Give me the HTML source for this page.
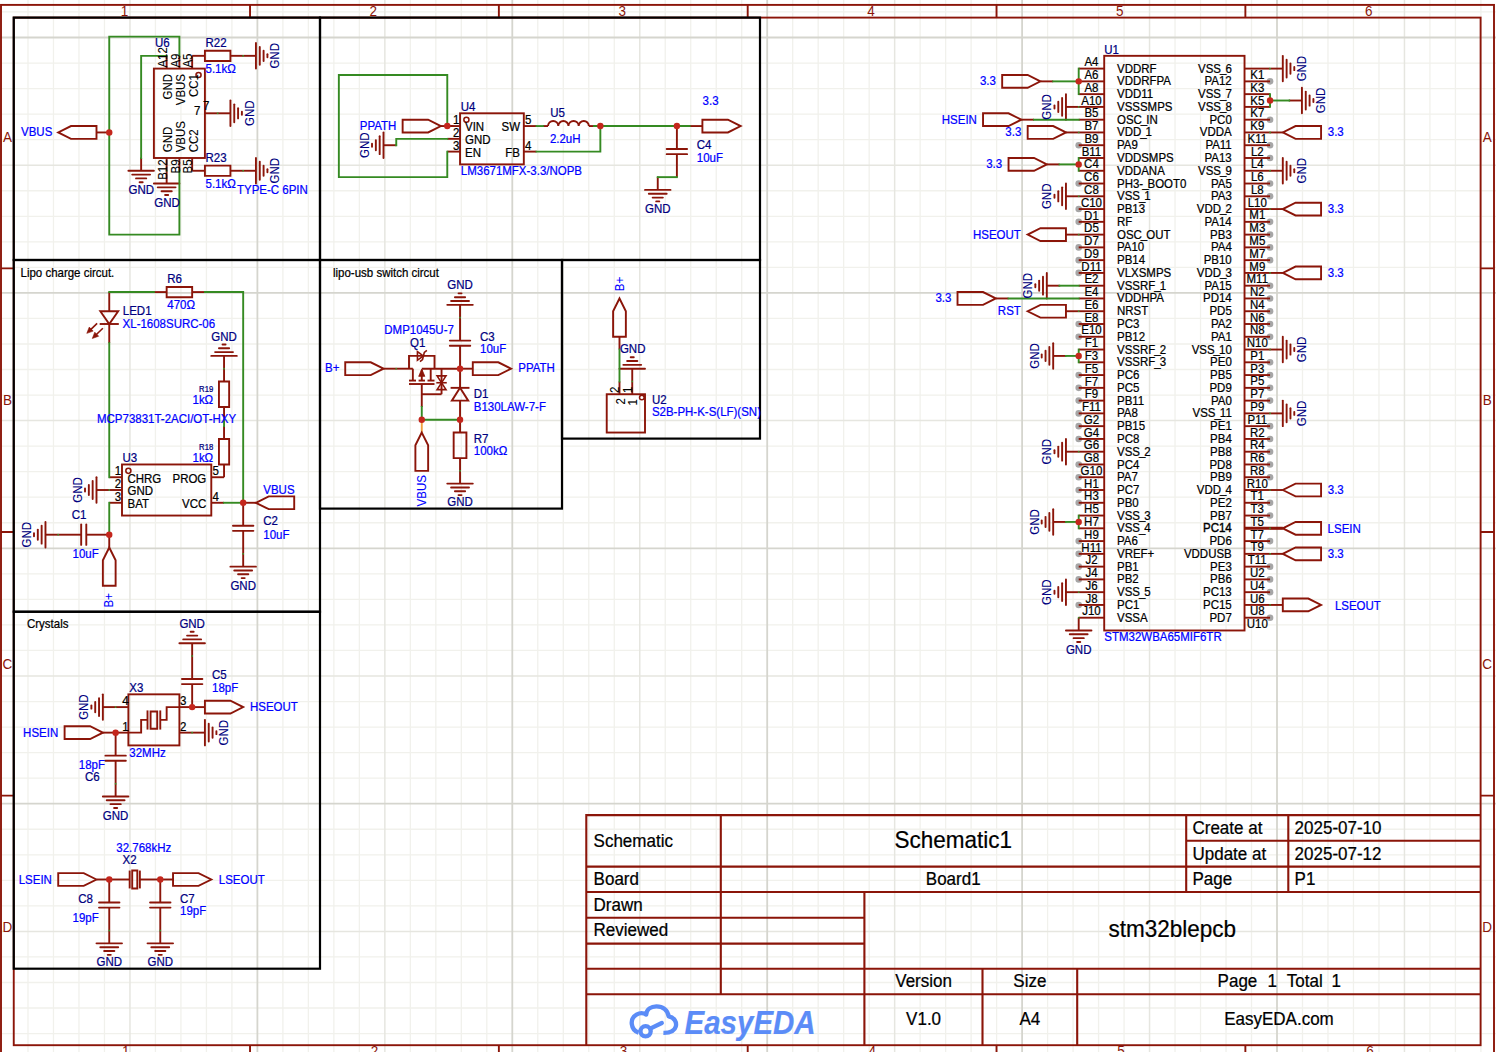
<!DOCTYPE html>
<html lang="en">
<head>
<meta charset="utf-8">
<title>stm32blepcb - Schematic1</title>
<style>html,body{margin:0;padding:0;background:#fff;overflow:hidden}svg{display:block}text{white-space:pre;stroke-width:.22px}.k{fill:#000;stroke:#000}.n{fill:#000080;stroke:#000080}.b{fill:#00f;stroke:#00f}.r{fill:#8b1509;stroke:none}.v{stroke-width:.08px}</style>
</head>
<body>
<svg width="1496" height="1052" viewBox="0 0 1496 1052" font-family="'Liberation Sans', sans-serif" font-size="11.5">
<g id="grid">
<path d="M27.99 0V1052M53.48 0V1052M78.97 0V1052M104.46 0V1052M155.44 0V1052M180.93 0V1052M206.42 0V1052M231.91 0V1052M282.89 0V1052M308.38 0V1052M333.87 0V1052M359.36 0V1052M410.34 0V1052M435.83 0V1052M461.32 0V1052M486.81 0V1052M537.79 0V1052M563.28 0V1052M588.77 0V1052M614.26 0V1052M665.24 0V1052M690.73 0V1052M716.22 0V1052M741.71 0V1052M792.69 0V1052M818.18 0V1052M843.67 0V1052M869.16 0V1052M920.14 0V1052M945.63 0V1052M971.12 0V1052M996.61 0V1052M1047.59 0V1052M1073.08 0V1052M1098.57 0V1052M1124.06 0V1052M1175.04 0V1052M1200.53 0V1052M1226.02 0V1052M1251.51 0V1052M1302.49 0V1052M1327.98 0V1052M1353.47 0V1052M1378.96 0V1052M1429.94 0V1052M1455.43 0V1052M1480.92 0V1052M0 11.96H1496M0 63.04H1496M0 88.58H1496M0 114.12H1496M0 139.66H1496M0 190.74H1496M0 216.28H1496M0 241.82H1496M0 267.36H1496M0 318.44H1496M0 343.98H1496M0 369.52H1496M0 395.06H1496M0 446.14H1496M0 471.68H1496M0 497.22H1496M0 522.76H1496M0 573.84H1496M0 599.38H1496M0 624.92H1496M0 650.46H1496M0 701.54H1496M0 727.08H1496M0 752.62H1496M0 778.16H1496M0 829.24H1496M0 854.78H1496M0 880.32H1496M0 905.86H1496M0 956.94H1496M0 982.48H1496M0 1008.02H1496M0 1033.56H1496" stroke="#f1f1ec" stroke-width="1.3" fill="none"/>
<path d="M129.95 0V1052M384.85 0V1052M639.75 0V1052M894.65 0V1052M1149.55 0V1052M1404.45 0V1052M0 165.2H1496M0 420.6H1496M0 676H1496M0 931.4H1496" stroke="#e6e6e0" stroke-width="1.5" fill="none"/>
<path d="M257.4 0V1052M512.3 0V1052M767.2 0V1052M1022.1 0V1052M1277 0V1052M0 37.5H1496M0 292.9H1496M0 548.3H1496M0 803.7H1496" stroke="#d5d5ce" stroke-width="1.8" fill="none"/>
</g>
<g id="frame">
<rect x="1" y="4.9" width="1493" height="1100" fill="none" stroke="#8b1509" stroke-width="1.9"/>
<rect x="13.75" y="17.6" width="1466.85" height="1027.6" fill="none" stroke="#8b1509" stroke-width="1.9"/>
<path d="M250.03 4.9V17.6M250.03 1045.2V1057M498.87 4.9V17.6M498.87 1045.2V1057M747.7 4.9V17.6M747.7 1045.2V1057M996.53 4.9V17.6M996.53 1045.2V1057M1245.37 4.9V17.6M1245.37 1045.2V1057M1 268.4H13.75M1480.6 268.4H1494M1 532H13.75M1480.6 532H1494M1 795.6H13.75M1480.6 795.6H1494" stroke="#8b1509" stroke-width="1.9" fill="none"/>
<path d="M586.3 1045.2V815.1H1480.6M720.8 815.1V994.2M586.3 866.6H1480.6M586.3 892H1480.6M586.3 917.8H864.4M586.3 943.6H864.4M586.3 968.7H1480.6M586.3 994.2H1480.6M864.4 892V1045.2M982.5 968.7V1045.2M1077.2 968.7V1045.2M1186.2 815.1V892M1288.3 815.1V892M1186.2 840.8H1480.6" stroke="#8b1509" stroke-width="2.1" fill="none"/>
<g fill="none" stroke="#5b8cf7" stroke-width="4.3" stroke-linecap="round" stroke-linejoin="round"><path d="M638.6 1032.6C630.6 1030 629.2 1018.6 636.5 1014.6C639.8 1012.8 643.6 1013 646.2 1014.6C646.6 1009.2 651.2 1006.3 656.4 1006.3C663 1006.3 668 1010.5 668.6 1016.4C674.5 1017.4 676.9 1022.2 675.8 1026.6C674.7 1030.9 671.2 1033 663.4 1032.9" stroke-linecap="butt"/><circle cx="645.6" cy="1031.3" r="5.1"/><path d="M650.2 1028.6L661.8 1023"/></g>
</g>
<g id="black">
<rect x="13.75" y="17.6" width="306.25" height="242.4" fill="none" stroke="#000" stroke-width="2.2"/>
<rect x="320" y="17.6" width="440" height="242.4" fill="none" stroke="#000" stroke-width="2.2"/>
<rect x="13.75" y="260" width="306.25" height="351.75" fill="none" stroke="#000" stroke-width="2.2"/>
<rect x="320" y="260" width="242" height="248.6" fill="none" stroke="#000" stroke-width="2.2"/>
<rect x="562" y="260" width="198" height="178.6" fill="none" stroke="#000" stroke-width="2.2"/>
<rect x="13.75" y="611.75" width="306.25" height="356.95" fill="none" stroke="#000" stroke-width="2.2"/>
</g>
<g id="nc">
<circle cx="1078.7" cy="145.22" r="3.3" fill="#a6a6a6"/>
<circle cx="1078.7" cy="183.53" r="3.3" fill="#a6a6a6"/>
<circle cx="1078.7" cy="209.07" r="3.3" fill="#a6a6a6"/>
<circle cx="1078.7" cy="221.84" r="3.3" fill="#a6a6a6"/>
<circle cx="1078.7" cy="247.38" r="3.3" fill="#a6a6a6"/>
<circle cx="1078.7" cy="260.15" r="3.3" fill="#a6a6a6"/>
<circle cx="1078.7" cy="272.92" r="3.3" fill="#a6a6a6"/>
<circle cx="1078.7" cy="324" r="3.3" fill="#a6a6a6"/>
<circle cx="1078.7" cy="336.77" r="3.3" fill="#a6a6a6"/>
<circle cx="1078.7" cy="375.08" r="3.3" fill="#a6a6a6"/>
<circle cx="1078.7" cy="387.85" r="3.3" fill="#a6a6a6"/>
<circle cx="1078.7" cy="400.62" r="3.3" fill="#a6a6a6"/>
<circle cx="1078.7" cy="413.39" r="3.3" fill="#a6a6a6"/>
<circle cx="1078.7" cy="426.16" r="3.3" fill="#a6a6a6"/>
<circle cx="1078.7" cy="438.93" r="3.3" fill="#a6a6a6"/>
<circle cx="1078.7" cy="464.47" r="3.3" fill="#a6a6a6"/>
<circle cx="1078.7" cy="477.24" r="3.3" fill="#a6a6a6"/>
<circle cx="1078.7" cy="490.01" r="3.3" fill="#a6a6a6"/>
<circle cx="1078.7" cy="502.78" r="3.3" fill="#a6a6a6"/>
<circle cx="1078.7" cy="541.09" r="3.3" fill="#a6a6a6"/>
<circle cx="1078.7" cy="553.86" r="3.3" fill="#a6a6a6"/>
<circle cx="1078.7" cy="566.63" r="3.3" fill="#a6a6a6"/>
<circle cx="1078.7" cy="579.4" r="3.3" fill="#a6a6a6"/>
<circle cx="1078.7" cy="604.94" r="3.3" fill="#a6a6a6"/>
<circle cx="1270.04" cy="81.37" r="3.3" fill="#a6a6a6"/>
<circle cx="1270.04" cy="119.68" r="3.3" fill="#a6a6a6"/>
<circle cx="1270.04" cy="145.22" r="3.3" fill="#a6a6a6"/>
<circle cx="1270.04" cy="157.99" r="3.3" fill="#a6a6a6"/>
<circle cx="1270.04" cy="183.53" r="3.3" fill="#a6a6a6"/>
<circle cx="1270.04" cy="196.3" r="3.3" fill="#a6a6a6"/>
<circle cx="1270.04" cy="221.84" r="3.3" fill="#a6a6a6"/>
<circle cx="1270.04" cy="234.61" r="3.3" fill="#a6a6a6"/>
<circle cx="1270.04" cy="247.38" r="3.3" fill="#a6a6a6"/>
<circle cx="1270.04" cy="260.15" r="3.3" fill="#a6a6a6"/>
<circle cx="1270.04" cy="285.69" r="3.3" fill="#a6a6a6"/>
<circle cx="1270.04" cy="298.46" r="3.3" fill="#a6a6a6"/>
<circle cx="1270.04" cy="311.23" r="3.3" fill="#a6a6a6"/>
<circle cx="1270.04" cy="324" r="3.3" fill="#a6a6a6"/>
<circle cx="1270.04" cy="336.77" r="3.3" fill="#a6a6a6"/>
<circle cx="1270.04" cy="362.31" r="3.3" fill="#a6a6a6"/>
<circle cx="1270.04" cy="375.08" r="3.3" fill="#a6a6a6"/>
<circle cx="1270.04" cy="387.85" r="3.3" fill="#a6a6a6"/>
<circle cx="1270.04" cy="400.62" r="3.3" fill="#a6a6a6"/>
<circle cx="1270.04" cy="426.16" r="3.3" fill="#a6a6a6"/>
<circle cx="1270.04" cy="438.93" r="3.3" fill="#a6a6a6"/>
<circle cx="1270.04" cy="451.7" r="3.3" fill="#a6a6a6"/>
<circle cx="1270.04" cy="464.47" r="3.3" fill="#a6a6a6"/>
<circle cx="1270.04" cy="477.24" r="3.3" fill="#a6a6a6"/>
<circle cx="1270.04" cy="502.78" r="3.3" fill="#a6a6a6"/>
<circle cx="1270.04" cy="515.55" r="3.3" fill="#a6a6a6"/>
<circle cx="1270.04" cy="541.09" r="3.3" fill="#a6a6a6"/>
<circle cx="1270.04" cy="566.63" r="3.3" fill="#a6a6a6"/>
<circle cx="1270.04" cy="579.4" r="3.3" fill="#a6a6a6"/>
<circle cx="1270.04" cy="592.17" r="3.3" fill="#a6a6a6"/>
<circle cx="1270.04" cy="617.71" r="3.3" fill="#a6a6a6"/>
</g>
<g id="sym">
<line x1="109.25" y1="132.45" x2="96.49" y2="132.45" stroke="#8b1509" stroke-width="1.9"/>
<path d="M96.49 126.06 L70.98 126.06 L58.22 132.45 L70.98 138.83 L96.49 138.83 Z" fill="none" stroke="#8b1509" stroke-width="1.9"/>
<rect x="153.89" y="68.6" width="51.02" height="89.39" fill="none" stroke="#8b1509" stroke-width="1.9"/>
<circle cx="198.54" cy="74.98" r="2.55" fill="none" stroke="#8b1509" stroke-width="1.5"/>
<line x1="166.65" y1="68.6" x2="166.65" y2="55.83" stroke="#8b1509" stroke-width="1.9"/>
<line x1="166.65" y1="157.99" x2="166.65" y2="170.76" stroke="#8b1509" stroke-width="1.9"/>
<line x1="179.4" y1="68.6" x2="179.4" y2="55.83" stroke="#8b1509" stroke-width="1.9"/>
<line x1="179.4" y1="157.99" x2="179.4" y2="170.76" stroke="#8b1509" stroke-width="1.9"/>
<line x1="192.16" y1="68.6" x2="192.16" y2="55.83" stroke="#8b1509" stroke-width="1.9"/>
<line x1="192.16" y1="157.99" x2="192.16" y2="170.76" stroke="#8b1509" stroke-width="1.9"/>
<line x1="204.92" y1="113.29" x2="217.67" y2="113.29" stroke="#8b1509" stroke-width="1.9"/>
<line x1="141.14" y1="157.99" x2="141.14" y2="170.76" stroke="#8b1509" stroke-width="1.9"/>
<line x1="153.89" y1="170.76" x2="128.38" y2="170.76" stroke="#8b1509" stroke-width="1.9" stroke-linecap="round"/>
<line x1="150.07" y1="174.59" x2="132.21" y2="174.59" stroke="#8b1509" stroke-width="1.9" stroke-linecap="round"/>
<line x1="146.24" y1="178.42" x2="136.03" y2="178.42" stroke="#8b1509" stroke-width="1.9" stroke-linecap="round"/>
<line x1="142.67" y1="182.25" x2="139.61" y2="182.25" stroke="#8b1509" stroke-width="1.9" stroke-linecap="round"/>
<line x1="166.65" y1="170.76" x2="166.65" y2="183.53" stroke="#8b1509" stroke-width="1.9"/>
<line x1="179.4" y1="183.53" x2="153.89" y2="183.53" stroke="#8b1509" stroke-width="1.9" stroke-linecap="round"/>
<line x1="175.58" y1="187.36" x2="157.72" y2="187.36" stroke="#8b1509" stroke-width="1.9" stroke-linecap="round"/>
<line x1="171.75" y1="191.19" x2="161.55" y2="191.19" stroke="#8b1509" stroke-width="1.9" stroke-linecap="round"/>
<line x1="168.18" y1="195.02" x2="165.12" y2="195.02" stroke="#8b1509" stroke-width="1.9" stroke-linecap="round"/>
<line x1="217.67" y1="113.29" x2="230.43" y2="113.29" stroke="#8b1509" stroke-width="1.9"/>
<line x1="230.43" y1="100.52" x2="230.43" y2="126.06" stroke="#8b1509" stroke-width="1.9" stroke-linecap="round"/>
<line x1="234.25" y1="104.36" x2="234.25" y2="122.23" stroke="#8b1509" stroke-width="1.9" stroke-linecap="round"/>
<line x1="238.08" y1="108.19" x2="238.08" y2="118.4" stroke="#8b1509" stroke-width="1.9" stroke-linecap="round"/>
<line x1="241.91" y1="111.76" x2="241.91" y2="114.83" stroke="#8b1509" stroke-width="1.9" stroke-linecap="round"/>
<line x1="192.16" y1="55.83" x2="204.92" y2="55.83" stroke="#8b1509" stroke-width="1.9"/>
<line x1="230.43" y1="55.83" x2="243.18" y2="55.83" stroke="#8b1509" stroke-width="1.9"/>
<path d="M204.92 60.94 L230.43 60.94 L230.43 50.72 L204.92 50.72 Z" fill="none" stroke="#8b1509" stroke-width="1.9"/>
<line x1="243.18" y1="55.83" x2="255.94" y2="55.83" stroke="#8b1509" stroke-width="1.9"/>
<line x1="255.94" y1="43.06" x2="255.94" y2="68.6" stroke="#8b1509" stroke-width="1.9" stroke-linecap="round"/>
<line x1="259.77" y1="46.89" x2="259.77" y2="64.77" stroke="#8b1509" stroke-width="1.9" stroke-linecap="round"/>
<line x1="263.59" y1="50.72" x2="263.59" y2="60.94" stroke="#8b1509" stroke-width="1.9" stroke-linecap="round"/>
<line x1="267.42" y1="54.3" x2="267.42" y2="57.36" stroke="#8b1509" stroke-width="1.9" stroke-linecap="round"/>
<line x1="192.16" y1="170.76" x2="204.92" y2="170.76" stroke="#8b1509" stroke-width="1.9"/>
<line x1="230.43" y1="170.76" x2="243.18" y2="170.76" stroke="#8b1509" stroke-width="1.9"/>
<path d="M204.92 175.87 L230.43 175.87 L230.43 165.65 L204.92 165.65 Z" fill="none" stroke="#8b1509" stroke-width="1.9"/>
<line x1="243.18" y1="170.76" x2="255.94" y2="170.76" stroke="#8b1509" stroke-width="1.9"/>
<line x1="255.94" y1="157.99" x2="255.94" y2="183.53" stroke="#8b1509" stroke-width="1.9" stroke-linecap="round"/>
<line x1="259.77" y1="161.82" x2="259.77" y2="179.7" stroke="#8b1509" stroke-width="1.9" stroke-linecap="round"/>
<line x1="263.59" y1="165.65" x2="263.59" y2="175.87" stroke="#8b1509" stroke-width="1.9" stroke-linecap="round"/>
<line x1="267.42" y1="169.23" x2="267.42" y2="172.29" stroke="#8b1509" stroke-width="1.9" stroke-linecap="round"/>
<line x1="396.26" y1="145.22" x2="383.5" y2="145.22" stroke="#8b1509" stroke-width="1.9"/>
<line x1="383.5" y1="157.99" x2="383.5" y2="132.45" stroke="#8b1509" stroke-width="1.9" stroke-linecap="round"/>
<line x1="379.67" y1="154.16" x2="379.67" y2="136.28" stroke="#8b1509" stroke-width="1.9" stroke-linecap="round"/>
<line x1="375.85" y1="150.33" x2="375.85" y2="140.11" stroke="#8b1509" stroke-width="1.9" stroke-linecap="round"/>
<line x1="372.02" y1="146.75" x2="372.02" y2="143.69" stroke="#8b1509" stroke-width="1.9" stroke-linecap="round"/>
<line x1="453.66" y1="126.06" x2="440.9" y2="126.06" stroke="#8b1509" stroke-width="1.9"/>
<path d="M440.9 126.06 L428.15 119.68 L402.63 119.68 L402.63 132.45 L428.15 132.45 Z" fill="none" stroke="#8b1509" stroke-width="1.9"/>
<rect x="460.04" y="113.29" width="63.78" height="51.08" fill="none" stroke="#8b1509" stroke-width="1.9"/>
<circle cx="466.41" cy="119.68" r="2.55" fill="none" stroke="#8b1509" stroke-width="1.5"/>
<line x1="447.28" y1="126.06" x2="460.04" y2="126.06" stroke="#8b1509" stroke-width="1.9"/>
<line x1="447.28" y1="138.83" x2="460.04" y2="138.83" stroke="#8b1509" stroke-width="1.9"/>
<line x1="447.28" y1="151.6" x2="460.04" y2="151.6" stroke="#8b1509" stroke-width="1.9"/>
<line x1="523.82" y1="126.06" x2="536.57" y2="126.06" stroke="#8b1509" stroke-width="1.9"/>
<line x1="523.82" y1="151.6" x2="536.57" y2="151.6" stroke="#8b1509" stroke-width="1.9"/>
<line x1="542.95" y1="126.06" x2="548.05" y2="126.06" stroke="#8b1509" stroke-width="1.9"/>
<line x1="588.87" y1="126.06" x2="593.97" y2="126.06" stroke="#8b1509" stroke-width="1.9"/>
<path d="M548.05 126.06A5.1 5.1 0 0 1 558.26 126.06A5.1 5.1 0 0 1 568.46 126.06A5.1 5.1 0 0 1 578.67 126.06A5.1 5.1 0 0 1 588.87 126.06" fill="none" stroke="#8b1509" stroke-width="1.9"/>
<line x1="689.64" y1="126.06" x2="702.4" y2="126.06" stroke="#8b1509" stroke-width="1.9"/>
<path d="M702.4 132.45 L727.91 132.45 L740.67 126.06 L727.91 119.68 L702.4 119.68 Z" fill="none" stroke="#8b1509" stroke-width="1.9"/>
<line x1="676.89" y1="126.06" x2="676.89" y2="149.05" stroke="#8b1509" stroke-width="1.9"/>
<line x1="676.89" y1="154.16" x2="676.89" y2="177.14" stroke="#8b1509" stroke-width="1.9"/>
<line x1="687.09" y1="149.05" x2="666.68" y2="149.05" stroke="#8b1509" stroke-width="1.9" stroke-linecap="round"/>
<line x1="687.09" y1="154.16" x2="666.68" y2="154.16" stroke="#8b1509" stroke-width="1.9" stroke-linecap="round"/>
<line x1="657.75" y1="177.14" x2="657.75" y2="189.91" stroke="#8b1509" stroke-width="1.9"/>
<line x1="670.51" y1="189.91" x2="645" y2="189.91" stroke="#8b1509" stroke-width="1.9" stroke-linecap="round"/>
<line x1="666.68" y1="193.75" x2="648.82" y2="193.75" stroke="#8b1509" stroke-width="1.9" stroke-linecap="round"/>
<line x1="662.86" y1="197.58" x2="652.65" y2="197.58" stroke="#8b1509" stroke-width="1.9" stroke-linecap="round"/>
<line x1="659.28" y1="201.41" x2="656.22" y2="201.41" stroke="#8b1509" stroke-width="1.9" stroke-linecap="round"/>
<line x1="153.89" y1="292.07" x2="166.65" y2="292.07" stroke="#8b1509" stroke-width="1.9"/>
<line x1="192.16" y1="292.07" x2="204.92" y2="292.07" stroke="#8b1509" stroke-width="1.9"/>
<path d="M166.65 297.18 L192.16 297.18 L192.16 286.97 L166.65 286.97 Z" fill="none" stroke="#8b1509" stroke-width="1.9"/>
<line x1="109.25" y1="292.07" x2="109.25" y2="311.23" stroke="#8b1509" stroke-width="1.9"/>
<path d="M100.32 311.23 L118.18 311.23 L109.25 324 Z" fill="none" stroke="#8b1509" stroke-width="1.9"/>
<line x1="99.68" y1="324" x2="118.81" y2="324" stroke="#8b1509" stroke-width="1.9"/>
<line x1="109.25" y1="324" x2="109.25" y2="343.15" stroke="#8b1509" stroke-width="1.9"/>
<line x1="97.13" y1="323.36" x2="88.84" y2="331.41" stroke="#8b1509" stroke-width="1.6"/>
<path d="M86.82 333.36 L89.26 327.08 L93.17 331.11 Z" fill="#8b1509" stroke="#8b1509" stroke-width="0.6"/>
<line x1="102.87" y1="328.21" x2="94.32" y2="336.51" stroke="#8b1509" stroke-width="1.6"/>
<path d="M92.31 338.47 L94.75 332.19 L98.66 336.22 Z" fill="#8b1509" stroke="#8b1509" stroke-width="0.6"/>
<rect x="122" y="464.47" width="89.29" height="51.08" fill="none" stroke="#8b1509" stroke-width="1.9"/>
<circle cx="128.38" cy="470.85" r="2.55" fill="none" stroke="#8b1509" stroke-width="1.5"/>
<line x1="109.25" y1="477.24" x2="122" y2="477.24" stroke="#8b1509" stroke-width="1.9"/>
<line x1="109.25" y1="490.01" x2="122" y2="490.01" stroke="#8b1509" stroke-width="1.9"/>
<line x1="109.25" y1="502.78" x2="122" y2="502.78" stroke="#8b1509" stroke-width="1.9"/>
<line x1="211.29" y1="477.24" x2="224.05" y2="477.24" stroke="#8b1509" stroke-width="1.9"/>
<line x1="211.29" y1="502.78" x2="224.05" y2="502.78" stroke="#8b1509" stroke-width="1.9"/>
<line x1="109.25" y1="490.01" x2="96.49" y2="490.01" stroke="#8b1509" stroke-width="1.9"/>
<line x1="96.49" y1="502.78" x2="96.49" y2="477.24" stroke="#8b1509" stroke-width="1.9" stroke-linecap="round"/>
<line x1="92.66" y1="498.95" x2="92.66" y2="481.07" stroke="#8b1509" stroke-width="1.9" stroke-linecap="round"/>
<line x1="88.84" y1="495.12" x2="88.84" y2="484.9" stroke="#8b1509" stroke-width="1.9" stroke-linecap="round"/>
<line x1="85.01" y1="491.54" x2="85.01" y2="488.48" stroke="#8b1509" stroke-width="1.9" stroke-linecap="round"/>
<line x1="224.05" y1="477.24" x2="224.05" y2="464.47" stroke="#8b1509" stroke-width="1.9"/>
<line x1="224.05" y1="438.93" x2="224.05" y2="426.16" stroke="#8b1509" stroke-width="1.9"/>
<path d="M229.15 464.47 L229.15 438.93 L218.95 438.93 L218.95 464.47 Z" fill="none" stroke="#8b1509" stroke-width="1.9"/>
<line x1="224.05" y1="419.77" x2="224.05" y2="407" stroke="#8b1509" stroke-width="1.9"/>
<line x1="224.05" y1="381.46" x2="224.05" y2="368.69" stroke="#8b1509" stroke-width="1.9"/>
<path d="M229.15 407 L229.15 381.46 L218.95 381.46 L218.95 407 Z" fill="none" stroke="#8b1509" stroke-width="1.9"/>
<line x1="224.05" y1="368.69" x2="224.05" y2="355.92" stroke="#8b1509" stroke-width="1.9"/>
<line x1="211.29" y1="355.92" x2="236.81" y2="355.92" stroke="#8b1509" stroke-width="1.9" stroke-linecap="round"/>
<line x1="215.12" y1="352.09" x2="232.98" y2="352.09" stroke="#8b1509" stroke-width="1.9" stroke-linecap="round"/>
<line x1="218.95" y1="348.26" x2="229.15" y2="348.26" stroke="#8b1509" stroke-width="1.9" stroke-linecap="round"/>
<line x1="222.52" y1="344.43" x2="225.58" y2="344.43" stroke="#8b1509" stroke-width="1.9" stroke-linecap="round"/>
<line x1="243.18" y1="502.78" x2="255.94" y2="502.78" stroke="#8b1509" stroke-width="1.9"/>
<path d="M255.94 502.78 L268.7 509.16 L294.21 509.16 L294.21 496.39 L268.7 496.39 Z" fill="none" stroke="#8b1509" stroke-width="1.9"/>
<line x1="243.18" y1="502.78" x2="243.18" y2="525.77" stroke="#8b1509" stroke-width="1.9"/>
<line x1="243.18" y1="530.87" x2="243.18" y2="553.86" stroke="#8b1509" stroke-width="1.9"/>
<line x1="253.39" y1="525.77" x2="232.98" y2="525.77" stroke="#8b1509" stroke-width="1.9" stroke-linecap="round"/>
<line x1="253.39" y1="530.87" x2="232.98" y2="530.87" stroke="#8b1509" stroke-width="1.9" stroke-linecap="round"/>
<line x1="243.18" y1="553.86" x2="243.18" y2="566.63" stroke="#8b1509" stroke-width="1.9"/>
<line x1="255.94" y1="566.63" x2="230.43" y2="566.63" stroke="#8b1509" stroke-width="1.9" stroke-linecap="round"/>
<line x1="252.11" y1="570.46" x2="234.25" y2="570.46" stroke="#8b1509" stroke-width="1.9" stroke-linecap="round"/>
<line x1="248.29" y1="574.29" x2="238.08" y2="574.29" stroke="#8b1509" stroke-width="1.9" stroke-linecap="round"/>
<line x1="244.71" y1="578.12" x2="241.65" y2="578.12" stroke="#8b1509" stroke-width="1.9" stroke-linecap="round"/>
<line x1="109.25" y1="534.7" x2="86.29" y2="534.7" stroke="#8b1509" stroke-width="1.9"/>
<line x1="81.18" y1="534.7" x2="58.22" y2="534.7" stroke="#8b1509" stroke-width="1.9"/>
<line x1="86.29" y1="544.92" x2="86.29" y2="524.49" stroke="#8b1509" stroke-width="1.9" stroke-linecap="round"/>
<line x1="81.18" y1="544.92" x2="81.18" y2="524.49" stroke="#8b1509" stroke-width="1.9" stroke-linecap="round"/>
<line x1="58.22" y1="534.7" x2="45.47" y2="534.7" stroke="#8b1509" stroke-width="1.9"/>
<line x1="45.47" y1="547.47" x2="45.47" y2="521.93" stroke="#8b1509" stroke-width="1.9" stroke-linecap="round"/>
<line x1="41.64" y1="543.64" x2="41.64" y2="525.77" stroke="#8b1509" stroke-width="1.9" stroke-linecap="round"/>
<line x1="37.81" y1="539.81" x2="37.81" y2="529.6" stroke="#8b1509" stroke-width="1.9" stroke-linecap="round"/>
<line x1="33.99" y1="536.24" x2="33.99" y2="533.17" stroke="#8b1509" stroke-width="1.9" stroke-linecap="round"/>
<line x1="109.25" y1="534.7" x2="109.25" y2="547.47" stroke="#8b1509" stroke-width="1.9"/>
<path d="M109.25 547.47 L102.87 560.25 L102.87 585.78 L115.62 585.78 L115.62 560.25 Z" fill="none" stroke="#8b1509" stroke-width="1.9"/>
<line x1="460.04" y1="317.61" x2="460.04" y2="304.84" stroke="#8b1509" stroke-width="1.9"/>
<line x1="447.28" y1="304.84" x2="472.79" y2="304.84" stroke="#8b1509" stroke-width="1.9" stroke-linecap="round"/>
<line x1="451.11" y1="301.01" x2="468.97" y2="301.01" stroke="#8b1509" stroke-width="1.9" stroke-linecap="round"/>
<line x1="454.93" y1="297.18" x2="465.14" y2="297.18" stroke="#8b1509" stroke-width="1.9" stroke-linecap="round"/>
<line x1="458.51" y1="293.35" x2="461.57" y2="293.35" stroke="#8b1509" stroke-width="1.9" stroke-linecap="round"/>
<line x1="460.04" y1="317.61" x2="460.04" y2="340.6" stroke="#8b1509" stroke-width="1.9"/>
<line x1="460.04" y1="345.71" x2="460.04" y2="368.69" stroke="#8b1509" stroke-width="1.9"/>
<line x1="470.24" y1="340.6" x2="449.83" y2="340.6" stroke="#8b1509" stroke-width="1.9" stroke-linecap="round"/>
<line x1="470.24" y1="345.71" x2="449.83" y2="345.71" stroke="#8b1509" stroke-width="1.9" stroke-linecap="round"/>
<line x1="460.04" y1="368.69" x2="472.79" y2="368.69" stroke="#8b1509" stroke-width="1.9"/>
<path d="M472.79 375.08 L498.3 375.08 L511.06 368.69 L498.3 362.31 L472.79 362.31 Z" fill="none" stroke="#8b1509" stroke-width="1.9"/>
<line x1="396.26" y1="368.69" x2="383.5" y2="368.69" stroke="#8b1509" stroke-width="1.9"/>
<path d="M383.5 368.69 L370.74 362.31 L345.23 362.31 L345.23 375.08 L370.74 375.08 Z" fill="none" stroke="#8b1509" stroke-width="1.9"/>
<line x1="396.26" y1="368.69" x2="412.84" y2="368.69" stroke="#8b1509" stroke-width="1.9"/>
<line x1="412.84" y1="368.69" x2="412.84" y2="380.57" stroke="#8b1509" stroke-width="1.9"/>
<path d="M409.01 368.69 L409.01 355.92 L434.52 355.92 L434.52 368.69" fill="none" stroke="#8b1509" stroke-width="1.9"/>
<line x1="421.77" y1="368.69" x2="460.04" y2="368.69" stroke="#8b1509" stroke-width="1.9"/>
<line x1="421.77" y1="369.97" x2="421.77" y2="380.57" stroke="#8b1509" stroke-width="1.9"/>
<line x1="430.7" y1="368.69" x2="430.7" y2="380.57" stroke="#8b1509" stroke-width="1.9"/>
<path d="M421.77 369.08 L418.71 376.36 L424.83 376.36 Z" fill="#8b1509" stroke="#8b1509" stroke-width="0.8"/>
<line x1="409.01" y1="380.57" x2="416.03" y2="380.57" stroke="#8b1509" stroke-width="1.9"/>
<line x1="418.58" y1="380.57" x2="424.96" y2="380.57" stroke="#8b1509" stroke-width="1.9"/>
<line x1="427.51" y1="380.57" x2="434.52" y2="380.57" stroke="#8b1509" stroke-width="1.9"/>
<line x1="409.01" y1="384.02" x2="434.52" y2="384.02" stroke="#8b1509" stroke-width="1.9"/>
<line x1="421.77" y1="384.02" x2="421.77" y2="407" stroke="#8b1509" stroke-width="1.9"/>
<path d="M417.43 351.58 L417.43 360.27 L423.3 355.92 Z" fill="none" stroke="#8b1509" stroke-width="1.6"/>
<path d="M426.87 350.31 L424.32 352.35 L422.53 359.5 L419.98 361.54" fill="none" stroke="#8b1509" stroke-width="1.6"/>
<line x1="441.54" y1="368.69" x2="441.54" y2="394.23" stroke="#8b1509" stroke-width="1.9"/>
<line x1="441.54" y1="394.23" x2="421.77" y2="394.23" stroke="#8b1509" stroke-width="1.9"/>
<path d="M437.08 375.85 L446 375.85 L437.08 389.64 L446 389.64 Z" fill="none" stroke="#8b1509" stroke-width="1.6"/>
<line x1="436.31" y1="382.74" x2="446.77" y2="382.74" stroke="#8b1509" stroke-width="1.6"/>
<line x1="460.04" y1="368.69" x2="460.04" y2="387.85" stroke="#8b1509" stroke-width="1.9"/>
<line x1="450.6" y1="387.85" x2="469.48" y2="387.85" stroke="#8b1509" stroke-width="1.9"/>
<path d="M460.04 387.85 L451.87 400.62 L468.2 400.62 Z" fill="none" stroke="#8b1509" stroke-width="1.9"/>
<line x1="460.04" y1="400.62" x2="460.04" y2="419.77" stroke="#8b1509" stroke-width="1.9"/>
<line x1="421.77" y1="419.77" x2="421.77" y2="432.54" stroke="#f0a040" stroke-width="1.9"/>
<path d="M421.77 432.54 L415.39 445.31 L415.39 470.85 L428.15 470.85 L428.15 445.31 Z" fill="none" stroke="#8b1509" stroke-width="1.9"/>
<line x1="460.04" y1="419.77" x2="460.04" y2="432.54" stroke="#8b1509" stroke-width="1.9"/>
<line x1="460.04" y1="458.08" x2="460.04" y2="470.85" stroke="#8b1509" stroke-width="1.9"/>
<path d="M453.66 432.54 L453.66 458.08 L466.41 458.08 L466.41 432.54 Z" fill="none" stroke="#8b1509" stroke-width="1.9"/>
<line x1="460.04" y1="470.85" x2="460.04" y2="483.62" stroke="#8b1509" stroke-width="1.9"/>
<line x1="472.79" y1="483.62" x2="447.28" y2="483.62" stroke="#8b1509" stroke-width="1.9" stroke-linecap="round"/>
<line x1="468.97" y1="487.46" x2="451.11" y2="487.46" stroke="#8b1509" stroke-width="1.9" stroke-linecap="round"/>
<line x1="465.14" y1="491.29" x2="454.93" y2="491.29" stroke="#8b1509" stroke-width="1.9" stroke-linecap="round"/>
<line x1="461.57" y1="495.12" x2="458.51" y2="495.12" stroke="#8b1509" stroke-width="1.9" stroke-linecap="round"/>
<line x1="619.49" y1="349.54" x2="619.49" y2="336.77" stroke="#8b1509" stroke-width="1.9"/>
<path d="M625.86 336.77 L625.86 311.23 L619.49 298.46 L613.11 311.23 L613.11 336.77 Z" fill="none" stroke="#8b1509" stroke-width="1.9"/>
<line x1="619.49" y1="381.46" x2="619.49" y2="394.23" stroke="#8b1509" stroke-width="1.9"/>
<line x1="632.24" y1="381.46" x2="632.24" y2="394.23" stroke="#8b1509" stroke-width="1.9"/>
<line x1="632.24" y1="381.46" x2="632.24" y2="368.69" stroke="#8b1509" stroke-width="1.9"/>
<line x1="619.49" y1="368.69" x2="645" y2="368.69" stroke="#8b1509" stroke-width="1.9" stroke-linecap="round"/>
<line x1="623.31" y1="364.86" x2="641.17" y2="364.86" stroke="#8b1509" stroke-width="1.9" stroke-linecap="round"/>
<line x1="627.14" y1="361.03" x2="637.34" y2="361.03" stroke="#8b1509" stroke-width="1.9" stroke-linecap="round"/>
<line x1="630.71" y1="357.2" x2="633.77" y2="357.2" stroke="#8b1509" stroke-width="1.9" stroke-linecap="round"/>
<rect x="606.73" y="394.23" width="38.27" height="38.31" fill="none" stroke="#8b1509" stroke-width="1.9"/>
<circle cx="641.81" cy="397.56" r="2.3" fill="none" stroke="#8b1509" stroke-width="1.5"/>
<line x1="192.16" y1="656.02" x2="192.16" y2="643.25" stroke="#8b1509" stroke-width="1.9"/>
<line x1="179.4" y1="643.25" x2="204.92" y2="643.25" stroke="#8b1509" stroke-width="1.9" stroke-linecap="round"/>
<line x1="183.23" y1="639.42" x2="201.09" y2="639.42" stroke="#8b1509" stroke-width="1.9" stroke-linecap="round"/>
<line x1="187.06" y1="635.59" x2="197.26" y2="635.59" stroke="#8b1509" stroke-width="1.9" stroke-linecap="round"/>
<line x1="190.63" y1="631.76" x2="193.69" y2="631.76" stroke="#8b1509" stroke-width="1.9" stroke-linecap="round"/>
<line x1="192.16" y1="656.02" x2="192.16" y2="679.01" stroke="#8b1509" stroke-width="1.9"/>
<line x1="192.16" y1="684.11" x2="192.16" y2="707.1" stroke="#8b1509" stroke-width="1.9"/>
<line x1="202.36" y1="679.01" x2="181.96" y2="679.01" stroke="#8b1509" stroke-width="1.9" stroke-linecap="round"/>
<line x1="202.36" y1="684.11" x2="181.96" y2="684.11" stroke="#8b1509" stroke-width="1.9" stroke-linecap="round"/>
<rect x="128.38" y="694.33" width="51.02" height="51.08" fill="none" stroke="#8b1509" stroke-width="1.9"/>
<line x1="115.62" y1="707.1" x2="128.38" y2="707.1" stroke="#8b1509" stroke-width="1.9"/>
<line x1="179.4" y1="707.1" x2="192.16" y2="707.1" stroke="#8b1509" stroke-width="1.9"/>
<line x1="115.62" y1="732.64" x2="128.38" y2="732.64" stroke="#8b1509" stroke-width="1.9"/>
<line x1="179.4" y1="732.64" x2="192.16" y2="732.64" stroke="#8b1509" stroke-width="1.9"/>
<path d="M128.38 732.64 L141.14 732.64 L141.14 719.87 L147.51 719.87" fill="none" stroke="#8b1509" stroke-width="1.9"/>
<line x1="147.51" y1="710.42" x2="147.51" y2="729.58" stroke="#8b1509" stroke-width="1.9"/>
<line x1="160.27" y1="710.42" x2="160.27" y2="729.58" stroke="#8b1509" stroke-width="1.9"/>
<path d="M150.58 711.44 L157.21 711.44 L157.21 728.81 L150.58 728.81 Z" fill="none" stroke="#8b1509" stroke-width="1.9"/>
<path d="M160.27 719.87 L166.65 719.87 L166.65 707.1 L179.4 707.1" fill="none" stroke="#8b1509" stroke-width="1.9"/>
<line x1="115.62" y1="707.1" x2="102.87" y2="707.1" stroke="#8b1509" stroke-width="1.9"/>
<line x1="102.87" y1="719.87" x2="102.87" y2="694.33" stroke="#8b1509" stroke-width="1.9" stroke-linecap="round"/>
<line x1="99.04" y1="716.04" x2="99.04" y2="698.16" stroke="#8b1509" stroke-width="1.9" stroke-linecap="round"/>
<line x1="95.21" y1="712.21" x2="95.21" y2="701.99" stroke="#8b1509" stroke-width="1.9" stroke-linecap="round"/>
<line x1="91.39" y1="708.63" x2="91.39" y2="705.57" stroke="#8b1509" stroke-width="1.9" stroke-linecap="round"/>
<line x1="115.62" y1="732.64" x2="102.87" y2="732.64" stroke="#8b1509" stroke-width="1.9"/>
<path d="M102.87 732.64 L90.11 726.25 L64.6 726.25 L64.6 739.02 L90.11 739.02 Z" fill="none" stroke="#8b1509" stroke-width="1.9"/>
<line x1="115.62" y1="732.64" x2="115.62" y2="755.63" stroke="#8b1509" stroke-width="1.9"/>
<line x1="115.62" y1="760.73" x2="115.62" y2="783.72" stroke="#8b1509" stroke-width="1.9"/>
<line x1="125.83" y1="755.63" x2="105.42" y2="755.63" stroke="#8b1509" stroke-width="1.9" stroke-linecap="round"/>
<line x1="125.83" y1="760.73" x2="105.42" y2="760.73" stroke="#8b1509" stroke-width="1.9" stroke-linecap="round"/>
<line x1="115.62" y1="783.72" x2="115.62" y2="796.49" stroke="#8b1509" stroke-width="1.9"/>
<line x1="128.38" y1="796.49" x2="102.87" y2="796.49" stroke="#8b1509" stroke-width="1.9" stroke-linecap="round"/>
<line x1="124.55" y1="800.32" x2="106.69" y2="800.32" stroke="#8b1509" stroke-width="1.9" stroke-linecap="round"/>
<line x1="120.73" y1="804.15" x2="110.52" y2="804.15" stroke="#8b1509" stroke-width="1.9" stroke-linecap="round"/>
<line x1="117.15" y1="807.98" x2="114.09" y2="807.98" stroke="#8b1509" stroke-width="1.9" stroke-linecap="round"/>
<line x1="192.16" y1="707.1" x2="204.92" y2="707.1" stroke="#8b1509" stroke-width="1.9"/>
<path d="M204.92 713.48 L230.43 713.48 L243.18 707.1 L230.43 700.71 L204.92 700.71 Z" fill="none" stroke="#8b1509" stroke-width="1.9"/>
<line x1="192.16" y1="732.64" x2="204.92" y2="732.64" stroke="#8b1509" stroke-width="1.9"/>
<line x1="204.92" y1="719.87" x2="204.92" y2="745.41" stroke="#8b1509" stroke-width="1.9" stroke-linecap="round"/>
<line x1="208.74" y1="723.7" x2="208.74" y2="741.58" stroke="#8b1509" stroke-width="1.9" stroke-linecap="round"/>
<line x1="212.57" y1="727.53" x2="212.57" y2="737.75" stroke="#8b1509" stroke-width="1.9" stroke-linecap="round"/>
<line x1="216.4" y1="731.11" x2="216.4" y2="734.17" stroke="#8b1509" stroke-width="1.9" stroke-linecap="round"/>
<line x1="109.25" y1="879.49" x2="96.49" y2="879.49" stroke="#8b1509" stroke-width="1.9"/>
<path d="M96.49 879.49 L83.73 873.11 L58.22 873.11 L58.22 885.88 L83.73 885.88 Z" fill="none" stroke="#8b1509" stroke-width="1.9"/>
<line x1="109.25" y1="879.49" x2="129.66" y2="879.49" stroke="#8b1509" stroke-width="1.9"/>
<line x1="129.66" y1="870.56" x2="129.66" y2="888.43" stroke="#8b1509" stroke-width="1.9"/>
<line x1="139.86" y1="870.56" x2="139.86" y2="888.43" stroke="#8b1509" stroke-width="1.9"/>
<path d="M132.21 870.56 L137.31 870.56 L137.31 888.43 L132.21 888.43 Z" fill="none" stroke="#8b1509" stroke-width="1.9"/>
<line x1="139.86" y1="879.49" x2="160.27" y2="879.49" stroke="#8b1509" stroke-width="1.9"/>
<line x1="160.27" y1="879.49" x2="173.03" y2="879.49" stroke="#8b1509" stroke-width="1.9"/>
<path d="M173.03 885.88 L198.54 885.88 L211.29 879.49 L198.54 873.11 L173.03 873.11 Z" fill="none" stroke="#8b1509" stroke-width="1.9"/>
<line x1="109.25" y1="879.49" x2="109.25" y2="902.48" stroke="#8b1509" stroke-width="1.9"/>
<line x1="109.25" y1="907.59" x2="109.25" y2="930.57" stroke="#8b1509" stroke-width="1.9"/>
<line x1="119.45" y1="902.48" x2="99.04" y2="902.48" stroke="#8b1509" stroke-width="1.9" stroke-linecap="round"/>
<line x1="119.45" y1="907.59" x2="99.04" y2="907.59" stroke="#8b1509" stroke-width="1.9" stroke-linecap="round"/>
<line x1="109.25" y1="930.57" x2="109.25" y2="943.34" stroke="#8b1509" stroke-width="1.9"/>
<line x1="122" y1="943.34" x2="96.49" y2="943.34" stroke="#8b1509" stroke-width="1.9" stroke-linecap="round"/>
<line x1="118.18" y1="947.18" x2="100.32" y2="947.18" stroke="#8b1509" stroke-width="1.9" stroke-linecap="round"/>
<line x1="114.35" y1="951.01" x2="104.14" y2="951.01" stroke="#8b1509" stroke-width="1.9" stroke-linecap="round"/>
<line x1="110.78" y1="954.84" x2="107.72" y2="954.84" stroke="#8b1509" stroke-width="1.9" stroke-linecap="round"/>
<line x1="160.27" y1="879.49" x2="160.27" y2="902.48" stroke="#8b1509" stroke-width="1.9"/>
<line x1="160.27" y1="907.59" x2="160.27" y2="930.57" stroke="#8b1509" stroke-width="1.9"/>
<line x1="170.47" y1="902.48" x2="150.07" y2="902.48" stroke="#8b1509" stroke-width="1.9" stroke-linecap="round"/>
<line x1="170.47" y1="907.59" x2="150.07" y2="907.59" stroke="#8b1509" stroke-width="1.9" stroke-linecap="round"/>
<line x1="160.27" y1="930.57" x2="160.27" y2="943.34" stroke="#8b1509" stroke-width="1.9"/>
<line x1="173.03" y1="943.34" x2="147.51" y2="943.34" stroke="#8b1509" stroke-width="1.9" stroke-linecap="round"/>
<line x1="169.2" y1="947.18" x2="151.34" y2="947.18" stroke="#8b1509" stroke-width="1.9" stroke-linecap="round"/>
<line x1="165.37" y1="951.01" x2="155.17" y2="951.01" stroke="#8b1509" stroke-width="1.9" stroke-linecap="round"/>
<line x1="161.8" y1="954.84" x2="158.74" y2="954.84" stroke="#8b1509" stroke-width="1.9" stroke-linecap="round"/>
<rect x="1104.21" y="55.83" width="140.32" height="574.65" fill="none" stroke="#8b1509" stroke-width="1.9"/>
<line x1="1053.19" y1="81.37" x2="1040.43" y2="81.37" stroke="#8b1509" stroke-width="1.9"/>
<path d="M1040.43 81.37 L1027.68 74.98 L1002.17 74.98 L1002.17 87.75 L1027.68 87.75 Z" fill="none" stroke="#8b1509" stroke-width="1.9"/>
<line x1="1078.7" y1="106.91" x2="1065.95" y2="106.91" stroke="#8b1509" stroke-width="1.9"/>
<line x1="1065.95" y1="119.68" x2="1065.95" y2="94.14" stroke="#8b1509" stroke-width="1.9" stroke-linecap="round"/>
<line x1="1062.12" y1="115.85" x2="1062.12" y2="97.97" stroke="#8b1509" stroke-width="1.9" stroke-linecap="round"/>
<line x1="1058.29" y1="112.02" x2="1058.29" y2="101.8" stroke="#8b1509" stroke-width="1.9" stroke-linecap="round"/>
<line x1="1054.47" y1="108.44" x2="1054.47" y2="105.38" stroke="#8b1509" stroke-width="1.9" stroke-linecap="round"/>
<line x1="1034.06" y1="119.68" x2="1021.3" y2="119.68" stroke="#8b1509" stroke-width="1.9"/>
<path d="M1021.3 119.68 L1008.54 113.29 L983.03 113.29 L983.03 126.06 L1008.54 126.06 Z" fill="none" stroke="#8b1509" stroke-width="1.9"/>
<line x1="1078.7" y1="132.45" x2="1065.95" y2="132.45" stroke="#8b1509" stroke-width="1.9"/>
<path d="M1065.95 132.45 L1053.19 126.06 L1027.68 126.06 L1027.68 138.83 L1053.19 138.83 Z" fill="none" stroke="#8b1509" stroke-width="1.9"/>
<line x1="1059.57" y1="164.38" x2="1046.81" y2="164.38" stroke="#8b1509" stroke-width="1.9"/>
<path d="M1046.81 164.38 L1034.06 157.99 L1008.54 157.99 L1008.54 170.76 L1034.06 170.76 Z" fill="none" stroke="#8b1509" stroke-width="1.9"/>
<line x1="1078.7" y1="196.3" x2="1065.95" y2="196.3" stroke="#8b1509" stroke-width="1.9"/>
<line x1="1065.95" y1="209.07" x2="1065.95" y2="183.53" stroke="#8b1509" stroke-width="1.9" stroke-linecap="round"/>
<line x1="1062.12" y1="205.24" x2="1062.12" y2="187.36" stroke="#8b1509" stroke-width="1.9" stroke-linecap="round"/>
<line x1="1058.29" y1="201.41" x2="1058.29" y2="191.19" stroke="#8b1509" stroke-width="1.9" stroke-linecap="round"/>
<line x1="1054.47" y1="197.83" x2="1054.47" y2="194.77" stroke="#8b1509" stroke-width="1.9" stroke-linecap="round"/>
<line x1="1078.7" y1="234.61" x2="1065.95" y2="234.61" stroke="#8b1509" stroke-width="1.9"/>
<path d="M1065.95 228.22 L1040.43 228.22 L1027.68 234.61 L1040.43 240.99 L1065.95 240.99 Z" fill="none" stroke="#8b1509" stroke-width="1.9"/>
<line x1="1059.57" y1="285.69" x2="1046.81" y2="285.69" stroke="#8b1509" stroke-width="1.9"/>
<line x1="1046.81" y1="298.46" x2="1046.81" y2="272.92" stroke="#8b1509" stroke-width="1.9" stroke-linecap="round"/>
<line x1="1042.99" y1="294.63" x2="1042.99" y2="276.75" stroke="#8b1509" stroke-width="1.9" stroke-linecap="round"/>
<line x1="1039.16" y1="290.8" x2="1039.16" y2="280.58" stroke="#8b1509" stroke-width="1.9" stroke-linecap="round"/>
<line x1="1035.33" y1="287.22" x2="1035.33" y2="284.16" stroke="#8b1509" stroke-width="1.9" stroke-linecap="round"/>
<line x1="1008.54" y1="298.46" x2="995.79" y2="298.46" stroke="#8b1509" stroke-width="1.9"/>
<path d="M995.79 298.46 L983.03 292.07 L957.52 292.07 L957.52 304.84 L983.03 304.84 Z" fill="none" stroke="#8b1509" stroke-width="1.9"/>
<line x1="1078.7" y1="311.23" x2="1065.95" y2="311.23" stroke="#8b1509" stroke-width="1.9"/>
<path d="M1065.95 304.84 L1040.43 304.84 L1027.68 311.23 L1040.43 317.61 L1065.95 317.61 Z" fill="none" stroke="#8b1509" stroke-width="1.9"/>
<line x1="1065.95" y1="355.92" x2="1053.19" y2="355.92" stroke="#8b1509" stroke-width="1.9"/>
<line x1="1053.19" y1="368.69" x2="1053.19" y2="343.15" stroke="#8b1509" stroke-width="1.9" stroke-linecap="round"/>
<line x1="1049.36" y1="364.86" x2="1049.36" y2="346.99" stroke="#8b1509" stroke-width="1.9" stroke-linecap="round"/>
<line x1="1045.54" y1="361.03" x2="1045.54" y2="350.82" stroke="#8b1509" stroke-width="1.9" stroke-linecap="round"/>
<line x1="1041.71" y1="357.46" x2="1041.71" y2="354.39" stroke="#8b1509" stroke-width="1.9" stroke-linecap="round"/>
<line x1="1078.7" y1="451.7" x2="1065.95" y2="451.7" stroke="#8b1509" stroke-width="1.9"/>
<line x1="1065.95" y1="464.47" x2="1065.95" y2="438.93" stroke="#8b1509" stroke-width="1.9" stroke-linecap="round"/>
<line x1="1062.12" y1="460.64" x2="1062.12" y2="442.76" stroke="#8b1509" stroke-width="1.9" stroke-linecap="round"/>
<line x1="1058.29" y1="456.81" x2="1058.29" y2="446.59" stroke="#8b1509" stroke-width="1.9" stroke-linecap="round"/>
<line x1="1054.47" y1="453.23" x2="1054.47" y2="450.17" stroke="#8b1509" stroke-width="1.9" stroke-linecap="round"/>
<line x1="1065.95" y1="521.93" x2="1053.19" y2="521.93" stroke="#8b1509" stroke-width="1.9"/>
<line x1="1053.19" y1="534.7" x2="1053.19" y2="509.16" stroke="#8b1509" stroke-width="1.9" stroke-linecap="round"/>
<line x1="1049.36" y1="530.87" x2="1049.36" y2="513" stroke="#8b1509" stroke-width="1.9" stroke-linecap="round"/>
<line x1="1045.54" y1="527.04" x2="1045.54" y2="516.83" stroke="#8b1509" stroke-width="1.9" stroke-linecap="round"/>
<line x1="1041.71" y1="523.47" x2="1041.71" y2="520.4" stroke="#8b1509" stroke-width="1.9" stroke-linecap="round"/>
<line x1="1078.7" y1="592.17" x2="1065.95" y2="592.17" stroke="#8b1509" stroke-width="1.9"/>
<line x1="1065.95" y1="604.94" x2="1065.95" y2="579.4" stroke="#8b1509" stroke-width="1.9" stroke-linecap="round"/>
<line x1="1062.12" y1="601.11" x2="1062.12" y2="583.23" stroke="#8b1509" stroke-width="1.9" stroke-linecap="round"/>
<line x1="1058.29" y1="597.28" x2="1058.29" y2="587.06" stroke="#8b1509" stroke-width="1.9" stroke-linecap="round"/>
<line x1="1054.47" y1="593.7" x2="1054.47" y2="590.64" stroke="#8b1509" stroke-width="1.9" stroke-linecap="round"/>
<line x1="1078.7" y1="617.71" x2="1078.7" y2="630.48" stroke="#8b1509" stroke-width="1.9"/>
<line x1="1091.46" y1="630.48" x2="1065.95" y2="630.48" stroke="#8b1509" stroke-width="1.9" stroke-linecap="round"/>
<line x1="1087.63" y1="634.31" x2="1069.77" y2="634.31" stroke="#8b1509" stroke-width="1.9" stroke-linecap="round"/>
<line x1="1083.8" y1="638.14" x2="1073.6" y2="638.14" stroke="#8b1509" stroke-width="1.9" stroke-linecap="round"/>
<line x1="1080.23" y1="641.97" x2="1077.17" y2="641.97" stroke="#8b1509" stroke-width="1.9" stroke-linecap="round"/>
<line x1="1270.04" y1="68.6" x2="1282.8" y2="68.6" stroke="#8b1509" stroke-width="1.9"/>
<line x1="1282.8" y1="55.83" x2="1282.8" y2="81.37" stroke="#8b1509" stroke-width="1.9" stroke-linecap="round"/>
<line x1="1286.62" y1="59.66" x2="1286.62" y2="77.54" stroke="#8b1509" stroke-width="1.9" stroke-linecap="round"/>
<line x1="1290.45" y1="63.49" x2="1290.45" y2="73.71" stroke="#8b1509" stroke-width="1.9" stroke-linecap="round"/>
<line x1="1294.28" y1="67.07" x2="1294.28" y2="70.13" stroke="#8b1509" stroke-width="1.9" stroke-linecap="round"/>
<line x1="1289.18" y1="100.52" x2="1301.93" y2="100.52" stroke="#8b1509" stroke-width="1.9"/>
<line x1="1301.93" y1="87.75" x2="1301.93" y2="113.29" stroke="#8b1509" stroke-width="1.9" stroke-linecap="round"/>
<line x1="1305.76" y1="91.59" x2="1305.76" y2="109.46" stroke="#8b1509" stroke-width="1.9" stroke-linecap="round"/>
<line x1="1309.59" y1="95.42" x2="1309.59" y2="105.63" stroke="#8b1509" stroke-width="1.9" stroke-linecap="round"/>
<line x1="1313.41" y1="98.99" x2="1313.41" y2="102.06" stroke="#8b1509" stroke-width="1.9" stroke-linecap="round"/>
<line x1="1270.04" y1="132.45" x2="1282.8" y2="132.45" stroke="#8b1509" stroke-width="1.9"/>
<path d="M1282.8 132.45 L1295.55 138.83 L1321.07 138.83 L1321.07 126.06 L1295.55 126.06 Z" fill="none" stroke="#8b1509" stroke-width="1.9"/>
<line x1="1270.04" y1="209.07" x2="1282.8" y2="209.07" stroke="#8b1509" stroke-width="1.9"/>
<path d="M1282.8 209.07 L1295.55 215.45 L1321.07 215.45 L1321.07 202.68 L1295.55 202.68 Z" fill="none" stroke="#8b1509" stroke-width="1.9"/>
<line x1="1270.04" y1="272.92" x2="1282.8" y2="272.92" stroke="#8b1509" stroke-width="1.9"/>
<path d="M1282.8 272.92 L1295.55 279.31 L1321.07 279.31 L1321.07 266.53 L1295.55 266.53 Z" fill="none" stroke="#8b1509" stroke-width="1.9"/>
<line x1="1270.04" y1="490.01" x2="1282.8" y2="490.01" stroke="#8b1509" stroke-width="1.9"/>
<path d="M1282.8 490.01 L1295.55 496.39 L1321.07 496.39 L1321.07 483.62 L1295.55 483.62 Z" fill="none" stroke="#8b1509" stroke-width="1.9"/>
<line x1="1270.04" y1="553.86" x2="1282.8" y2="553.86" stroke="#8b1509" stroke-width="1.9"/>
<path d="M1282.8 553.86 L1295.55 560.25 L1321.07 560.25 L1321.07 547.47 L1295.55 547.47 Z" fill="none" stroke="#8b1509" stroke-width="1.9"/>
<line x1="1270.04" y1="170.76" x2="1282.8" y2="170.76" stroke="#8b1509" stroke-width="1.9"/>
<line x1="1282.8" y1="157.99" x2="1282.8" y2="183.53" stroke="#8b1509" stroke-width="1.9" stroke-linecap="round"/>
<line x1="1286.62" y1="161.82" x2="1286.62" y2="179.7" stroke="#8b1509" stroke-width="1.9" stroke-linecap="round"/>
<line x1="1290.45" y1="165.65" x2="1290.45" y2="175.87" stroke="#8b1509" stroke-width="1.9" stroke-linecap="round"/>
<line x1="1294.28" y1="169.23" x2="1294.28" y2="172.29" stroke="#8b1509" stroke-width="1.9" stroke-linecap="round"/>
<line x1="1270.04" y1="349.54" x2="1282.8" y2="349.54" stroke="#8b1509" stroke-width="1.9"/>
<line x1="1282.8" y1="336.77" x2="1282.8" y2="362.31" stroke="#8b1509" stroke-width="1.9" stroke-linecap="round"/>
<line x1="1286.62" y1="340.6" x2="1286.62" y2="358.48" stroke="#8b1509" stroke-width="1.9" stroke-linecap="round"/>
<line x1="1290.45" y1="344.43" x2="1290.45" y2="354.65" stroke="#8b1509" stroke-width="1.9" stroke-linecap="round"/>
<line x1="1294.28" y1="348.01" x2="1294.28" y2="351.07" stroke="#8b1509" stroke-width="1.9" stroke-linecap="round"/>
<line x1="1270.04" y1="413.39" x2="1282.8" y2="413.39" stroke="#8b1509" stroke-width="1.9"/>
<line x1="1282.8" y1="400.62" x2="1282.8" y2="426.16" stroke="#8b1509" stroke-width="1.9" stroke-linecap="round"/>
<line x1="1286.62" y1="404.45" x2="1286.62" y2="422.33" stroke="#8b1509" stroke-width="1.9" stroke-linecap="round"/>
<line x1="1290.45" y1="408.28" x2="1290.45" y2="418.5" stroke="#8b1509" stroke-width="1.9" stroke-linecap="round"/>
<line x1="1294.28" y1="411.86" x2="1294.28" y2="414.92" stroke="#8b1509" stroke-width="1.9" stroke-linecap="round"/>
<line x1="1270.04" y1="528.32" x2="1282.8" y2="528.32" stroke="#8b1509" stroke-width="1.9"/>
<path d="M1282.8 528.32 L1295.55 534.7 L1321.07 534.7 L1321.07 521.93 L1295.55 521.93 Z" fill="none" stroke="#8b1509" stroke-width="1.9"/>
<line x1="1270.04" y1="604.94" x2="1282.8" y2="604.94" stroke="#8b1509" stroke-width="1.9"/>
<path d="M1282.8 611.32 L1308.31 611.32 L1321.07 604.94 L1308.31 598.55 L1282.8 598.55 Z" fill="none" stroke="#8b1509" stroke-width="1.9"/>
<line x1="1104.21" y1="68.6" x2="1078.7" y2="68.6" stroke="#8b1509" stroke-width="1.9"/>
<line x1="1104.21" y1="81.37" x2="1078.7" y2="81.37" stroke="#8b1509" stroke-width="1.9"/>
<line x1="1104.21" y1="94.14" x2="1078.7" y2="94.14" stroke="#8b1509" stroke-width="1.9"/>
<line x1="1104.21" y1="106.91" x2="1078.7" y2="106.91" stroke="#8b1509" stroke-width="1.9"/>
<line x1="1104.21" y1="119.68" x2="1078.7" y2="119.68" stroke="#8b1509" stroke-width="1.9"/>
<line x1="1104.21" y1="132.45" x2="1078.7" y2="132.45" stroke="#8b1509" stroke-width="1.9"/>
<line x1="1104.21" y1="145.22" x2="1078.7" y2="145.22" stroke="#8b1509" stroke-width="1.9"/>
<line x1="1104.21" y1="157.99" x2="1078.7" y2="157.99" stroke="#8b1509" stroke-width="1.9"/>
<line x1="1104.21" y1="170.76" x2="1078.7" y2="170.76" stroke="#8b1509" stroke-width="1.9"/>
<line x1="1104.21" y1="183.53" x2="1078.7" y2="183.53" stroke="#8b1509" stroke-width="1.9"/>
<line x1="1104.21" y1="196.3" x2="1078.7" y2="196.3" stroke="#8b1509" stroke-width="1.9"/>
<line x1="1104.21" y1="209.07" x2="1078.7" y2="209.07" stroke="#8b1509" stroke-width="1.9"/>
<line x1="1104.21" y1="221.84" x2="1078.7" y2="221.84" stroke="#8b1509" stroke-width="1.9"/>
<line x1="1104.21" y1="234.61" x2="1078.7" y2="234.61" stroke="#8b1509" stroke-width="1.9"/>
<line x1="1104.21" y1="247.38" x2="1078.7" y2="247.38" stroke="#8b1509" stroke-width="1.9"/>
<line x1="1104.21" y1="260.15" x2="1078.7" y2="260.15" stroke="#8b1509" stroke-width="1.9"/>
<line x1="1104.21" y1="272.92" x2="1078.7" y2="272.92" stroke="#8b1509" stroke-width="1.9"/>
<line x1="1104.21" y1="285.69" x2="1078.7" y2="285.69" stroke="#8b1509" stroke-width="1.9"/>
<line x1="1104.21" y1="298.46" x2="1078.7" y2="298.46" stroke="#8b1509" stroke-width="1.9"/>
<line x1="1104.21" y1="311.23" x2="1078.7" y2="311.23" stroke="#8b1509" stroke-width="1.9"/>
<line x1="1104.21" y1="324" x2="1078.7" y2="324" stroke="#8b1509" stroke-width="1.9"/>
<line x1="1104.21" y1="336.77" x2="1078.7" y2="336.77" stroke="#8b1509" stroke-width="1.9"/>
<line x1="1104.21" y1="349.54" x2="1078.7" y2="349.54" stroke="#8b1509" stroke-width="1.9"/>
<line x1="1104.21" y1="362.31" x2="1078.7" y2="362.31" stroke="#8b1509" stroke-width="1.9"/>
<line x1="1104.21" y1="375.08" x2="1078.7" y2="375.08" stroke="#8b1509" stroke-width="1.9"/>
<line x1="1104.21" y1="387.85" x2="1078.7" y2="387.85" stroke="#8b1509" stroke-width="1.9"/>
<line x1="1104.21" y1="400.62" x2="1078.7" y2="400.62" stroke="#8b1509" stroke-width="1.9"/>
<line x1="1104.21" y1="413.39" x2="1078.7" y2="413.39" stroke="#8b1509" stroke-width="1.9"/>
<line x1="1104.21" y1="426.16" x2="1078.7" y2="426.16" stroke="#8b1509" stroke-width="1.9"/>
<line x1="1104.21" y1="438.93" x2="1078.7" y2="438.93" stroke="#8b1509" stroke-width="1.9"/>
<line x1="1104.21" y1="451.7" x2="1078.7" y2="451.7" stroke="#8b1509" stroke-width="1.9"/>
<line x1="1104.21" y1="464.47" x2="1078.7" y2="464.47" stroke="#8b1509" stroke-width="1.9"/>
<line x1="1104.21" y1="477.24" x2="1078.7" y2="477.24" stroke="#8b1509" stroke-width="1.9"/>
<line x1="1104.21" y1="490.01" x2="1078.7" y2="490.01" stroke="#8b1509" stroke-width="1.9"/>
<line x1="1104.21" y1="502.78" x2="1078.7" y2="502.78" stroke="#8b1509" stroke-width="1.9"/>
<line x1="1104.21" y1="515.55" x2="1078.7" y2="515.55" stroke="#8b1509" stroke-width="1.9"/>
<line x1="1104.21" y1="528.32" x2="1078.7" y2="528.32" stroke="#8b1509" stroke-width="1.9"/>
<line x1="1104.21" y1="541.09" x2="1078.7" y2="541.09" stroke="#8b1509" stroke-width="1.9"/>
<line x1="1104.21" y1="553.86" x2="1078.7" y2="553.86" stroke="#8b1509" stroke-width="1.9"/>
<line x1="1104.21" y1="566.63" x2="1078.7" y2="566.63" stroke="#8b1509" stroke-width="1.9"/>
<line x1="1104.21" y1="579.4" x2="1078.7" y2="579.4" stroke="#8b1509" stroke-width="1.9"/>
<line x1="1104.21" y1="592.17" x2="1078.7" y2="592.17" stroke="#8b1509" stroke-width="1.9"/>
<line x1="1104.21" y1="604.94" x2="1078.7" y2="604.94" stroke="#8b1509" stroke-width="1.9"/>
<line x1="1104.21" y1="617.71" x2="1078.7" y2="617.71" stroke="#8b1509" stroke-width="1.9"/>
<line x1="1244.53" y1="68.6" x2="1270.04" y2="68.6" stroke="#8b1509" stroke-width="1.9"/>
<line x1="1244.53" y1="81.37" x2="1270.04" y2="81.37" stroke="#8b1509" stroke-width="1.9"/>
<line x1="1244.53" y1="94.14" x2="1270.04" y2="94.14" stroke="#8b1509" stroke-width="1.9"/>
<line x1="1244.53" y1="106.91" x2="1270.04" y2="106.91" stroke="#8b1509" stroke-width="1.9"/>
<line x1="1244.53" y1="119.68" x2="1270.04" y2="119.68" stroke="#8b1509" stroke-width="1.9"/>
<line x1="1244.53" y1="132.45" x2="1270.04" y2="132.45" stroke="#8b1509" stroke-width="1.9"/>
<line x1="1244.53" y1="145.22" x2="1270.04" y2="145.22" stroke="#8b1509" stroke-width="1.9"/>
<line x1="1244.53" y1="157.99" x2="1270.04" y2="157.99" stroke="#8b1509" stroke-width="1.9"/>
<line x1="1244.53" y1="170.76" x2="1270.04" y2="170.76" stroke="#8b1509" stroke-width="1.9"/>
<line x1="1244.53" y1="183.53" x2="1270.04" y2="183.53" stroke="#8b1509" stroke-width="1.9"/>
<line x1="1244.53" y1="196.3" x2="1270.04" y2="196.3" stroke="#8b1509" stroke-width="1.9"/>
<line x1="1244.53" y1="209.07" x2="1270.04" y2="209.07" stroke="#8b1509" stroke-width="1.9"/>
<line x1="1244.53" y1="221.84" x2="1270.04" y2="221.84" stroke="#8b1509" stroke-width="1.9"/>
<line x1="1244.53" y1="234.61" x2="1270.04" y2="234.61" stroke="#8b1509" stroke-width="1.9"/>
<line x1="1244.53" y1="247.38" x2="1270.04" y2="247.38" stroke="#8b1509" stroke-width="1.9"/>
<line x1="1244.53" y1="260.15" x2="1270.04" y2="260.15" stroke="#8b1509" stroke-width="1.9"/>
<line x1="1244.53" y1="272.92" x2="1270.04" y2="272.92" stroke="#8b1509" stroke-width="1.9"/>
<line x1="1244.53" y1="285.69" x2="1270.04" y2="285.69" stroke="#8b1509" stroke-width="1.9"/>
<line x1="1244.53" y1="298.46" x2="1270.04" y2="298.46" stroke="#8b1509" stroke-width="1.9"/>
<line x1="1244.53" y1="311.23" x2="1270.04" y2="311.23" stroke="#8b1509" stroke-width="1.9"/>
<line x1="1244.53" y1="324" x2="1270.04" y2="324" stroke="#8b1509" stroke-width="1.9"/>
<line x1="1244.53" y1="336.77" x2="1270.04" y2="336.77" stroke="#8b1509" stroke-width="1.9"/>
<line x1="1244.53" y1="349.54" x2="1270.04" y2="349.54" stroke="#8b1509" stroke-width="1.9"/>
<line x1="1244.53" y1="362.31" x2="1270.04" y2="362.31" stroke="#8b1509" stroke-width="1.9"/>
<line x1="1244.53" y1="375.08" x2="1270.04" y2="375.08" stroke="#8b1509" stroke-width="1.9"/>
<line x1="1244.53" y1="387.85" x2="1270.04" y2="387.85" stroke="#8b1509" stroke-width="1.9"/>
<line x1="1244.53" y1="400.62" x2="1270.04" y2="400.62" stroke="#8b1509" stroke-width="1.9"/>
<line x1="1244.53" y1="413.39" x2="1270.04" y2="413.39" stroke="#8b1509" stroke-width="1.9"/>
<line x1="1244.53" y1="426.16" x2="1270.04" y2="426.16" stroke="#8b1509" stroke-width="1.9"/>
<line x1="1244.53" y1="438.93" x2="1270.04" y2="438.93" stroke="#8b1509" stroke-width="1.9"/>
<line x1="1244.53" y1="451.7" x2="1270.04" y2="451.7" stroke="#8b1509" stroke-width="1.9"/>
<line x1="1244.53" y1="464.47" x2="1270.04" y2="464.47" stroke="#8b1509" stroke-width="1.9"/>
<line x1="1244.53" y1="477.24" x2="1270.04" y2="477.24" stroke="#8b1509" stroke-width="1.9"/>
<line x1="1244.53" y1="490.01" x2="1270.04" y2="490.01" stroke="#8b1509" stroke-width="1.9"/>
<line x1="1244.53" y1="502.78" x2="1270.04" y2="502.78" stroke="#8b1509" stroke-width="1.9"/>
<line x1="1244.53" y1="515.55" x2="1270.04" y2="515.55" stroke="#8b1509" stroke-width="1.9"/>
<line x1="1244.53" y1="528.32" x2="1282.8" y2="528.32" stroke="#8b1509" stroke-width="3"/>
<line x1="1244.53" y1="541.09" x2="1270.04" y2="541.09" stroke="#8b1509" stroke-width="1.9"/>
<line x1="1244.53" y1="553.86" x2="1270.04" y2="553.86" stroke="#8b1509" stroke-width="1.9"/>
<line x1="1244.53" y1="566.63" x2="1270.04" y2="566.63" stroke="#8b1509" stroke-width="1.9"/>
<line x1="1244.53" y1="579.4" x2="1270.04" y2="579.4" stroke="#8b1509" stroke-width="1.9"/>
<line x1="1244.53" y1="592.17" x2="1270.04" y2="592.17" stroke="#8b1509" stroke-width="1.9"/>
<line x1="1244.53" y1="604.94" x2="1270.04" y2="604.94" stroke="#8b1509" stroke-width="1.9"/>
<line x1="1244.53" y1="617.71" x2="1270.04" y2="617.71" stroke="#8b1509" stroke-width="1.9"/>
</g>
<g id="wire">
<path d="M179.4 55.83 L179.4 36.67 L109.25 36.67 L109.25 234.61 L179.4 234.61 L179.4 170.76" fill="none" stroke="#358a22" stroke-width="1.9" stroke-linecap="square"/>
<path d="M166.65 55.83 L141.14 55.83 L141.14 157.99" fill="none" stroke="#358a22" stroke-width="1.9" stroke-linecap="square"/>
<path d="M447.28 126.06 L447.28 74.98 L338.85 74.98 L338.85 177.14 L447.28 177.14 L447.28 151.6" fill="none" stroke="#358a22" stroke-width="1.9" stroke-linecap="square"/>
<path d="M447.28 138.83 L396.26 138.83 L396.26 145.22" fill="none" stroke="#358a22" stroke-width="1.9" stroke-linecap="square"/>
<path d="M536.57 126.06 L542.95 126.06" fill="none" stroke="#358a22" stroke-width="1.9" stroke-linecap="square"/>
<path d="M593.97 126.06 L689.64 126.06" fill="none" stroke="#358a22" stroke-width="1.9" stroke-linecap="square"/>
<path d="M600.35 126.06 L600.35 151.6 L536.57 151.6" fill="none" stroke="#358a22" stroke-width="1.9" stroke-linecap="square"/>
<path d="M676.89 177.14 L657.75 177.14" fill="none" stroke="#358a22" stroke-width="1.9" stroke-linecap="square"/>
<path d="M109.25 292.07 L153.89 292.07" fill="none" stroke="#358a22" stroke-width="1.9" stroke-linecap="square"/>
<path d="M204.92 292.07 L243.18 292.07 L243.18 502.78" fill="none" stroke="#358a22" stroke-width="1.9" stroke-linecap="square"/>
<path d="M109.25 343.15 L109.25 477.24" fill="none" stroke="#358a22" stroke-width="1.9" stroke-linecap="square"/>
<path d="M109.25 502.78 L109.25 534.7" fill="none" stroke="#358a22" stroke-width="1.9" stroke-linecap="square"/>
<path d="M224.05 502.78 L243.18 502.78" fill="none" stroke="#358a22" stroke-width="1.9" stroke-linecap="square"/>
<path d="M224.05 419.77 L224.05 426.16" fill="none" stroke="#358a22" stroke-width="1.9" stroke-linecap="square"/>
<path d="M421.77 407 L421.77 419.77 L460.04 419.77" fill="none" stroke="#358a22" stroke-width="1.9" stroke-linecap="square"/>
<path d="M619.49 349.54 L619.49 381.46" fill="none" stroke="#358a22" stroke-width="1.9" stroke-linecap="square"/>
<path d="M1078.7 68.6 L1078.7 94.14" fill="none" stroke="#358a22" stroke-width="1.9" stroke-linecap="square"/>
<path d="M1078.7 81.37 L1053.19 81.37" fill="none" stroke="#358a22" stroke-width="1.9" stroke-linecap="square"/>
<path d="M1078.7 119.68 L1034.06 119.68" fill="none" stroke="#358a22" stroke-width="1.9" stroke-linecap="square"/>
<path d="M1078.7 157.99 L1078.7 170.76" fill="none" stroke="#358a22" stroke-width="1.9" stroke-linecap="square"/>
<path d="M1078.7 164.38 L1059.57 164.38" fill="none" stroke="#358a22" stroke-width="1.9" stroke-linecap="square"/>
<path d="M1078.7 285.69 L1059.57 285.69" fill="none" stroke="#358a22" stroke-width="1.9" stroke-linecap="square"/>
<path d="M1078.7 298.46 L1008.54 298.46" fill="none" stroke="#358a22" stroke-width="1.9" stroke-linecap="square"/>
<path d="M1078.7 349.54 L1078.7 362.31" fill="none" stroke="#358a22" stroke-width="1.9" stroke-linecap="square"/>
<path d="M1078.7 355.92 L1065.95 355.92" fill="none" stroke="#358a22" stroke-width="1.9" stroke-linecap="square"/>
<path d="M1078.7 515.55 L1078.7 528.32" fill="none" stroke="#358a22" stroke-width="1.9" stroke-linecap="square"/>
<path d="M1078.7 521.93 L1065.95 521.93" fill="none" stroke="#358a22" stroke-width="1.9" stroke-linecap="square"/>
<path d="M1270.04 94.14 L1270.04 106.91" fill="none" stroke="#358a22" stroke-width="1.9" stroke-linecap="square"/>
<path d="M1270.04 100.52 L1289.18 100.52" fill="none" stroke="#358a22" stroke-width="1.9" stroke-linecap="square"/>
</g>
<g id="jct">
<circle cx="109.25" cy="132.45" r="3.2" fill="#c4261c"/>
<rect x="140.34" y="157.19" width="1.6" height="1.6" fill="#3c8c28"/>
<rect x="165.85" y="169.96" width="1.6" height="1.6" fill="#3c8c28"/>
<rect x="216.87" y="112.49" width="1.6" height="1.6" fill="#3c8c28"/>
<rect x="242.38" y="55.03" width="1.6" height="1.6" fill="#3c8c28"/>
<rect x="242.38" y="169.96" width="1.6" height="1.6" fill="#3c8c28"/>
<rect x="395.46" y="144.42" width="1.6" height="1.6" fill="#3c8c28"/>
<circle cx="447.28" cy="126.06" r="3.2" fill="#c4261c"/>
<circle cx="600.35" cy="126.06" r="3.2" fill="#c4261c"/>
<circle cx="676.89" cy="126.06" r="3.2" fill="#c4261c"/>
<rect x="656.95" y="176.34" width="1.6" height="1.6" fill="#3c8c28"/>
<rect x="108.45" y="489.21" width="1.6" height="1.6" fill="#3c8c28"/>
<rect x="223.25" y="367.89" width="1.6" height="1.6" fill="#3c8c28"/>
<circle cx="243.18" cy="502.78" r="3.2" fill="#c4261c"/>
<rect x="242.38" y="553.06" width="1.6" height="1.6" fill="#3c8c28"/>
<circle cx="109.25" cy="534.7" r="3.2" fill="#c4261c"/>
<rect x="57.42" y="533.9" width="1.6" height="1.6" fill="#3c8c28"/>
<rect x="459.24" y="316.81" width="1.6" height="1.6" fill="#3c8c28"/>
<circle cx="460.04" cy="368.69" r="3.2" fill="#c4261c"/>
<rect x="395.46" y="367.89" width="1.6" height="1.6" fill="#3c8c28"/>
<circle cx="421.77" cy="419.77" r="3.2" fill="#c4261c"/>
<circle cx="460.04" cy="419.77" r="3.2" fill="#c4261c"/>
<rect x="459.24" y="470.05" width="1.6" height="1.6" fill="#3c8c28"/>
<rect x="631.44" y="380.66" width="1.6" height="1.6" fill="#3c8c28"/>
<rect x="191.36" y="655.22" width="1.6" height="1.6" fill="#3c8c28"/>
<circle cx="192.16" cy="707.1" r="3.2" fill="#c4261c"/>
<rect x="114.82" y="706.3" width="1.6" height="1.6" fill="#3c8c28"/>
<circle cx="115.62" cy="732.64" r="3.2" fill="#c4261c"/>
<rect x="114.82" y="782.92" width="1.6" height="1.6" fill="#3c8c28"/>
<rect x="191.36" y="731.84" width="1.6" height="1.6" fill="#3c8c28"/>
<circle cx="109.25" cy="879.49" r="3.2" fill="#c4261c"/>
<circle cx="160.27" cy="879.49" r="3.2" fill="#c4261c"/>
<rect x="108.45" y="929.77" width="1.6" height="1.6" fill="#3c8c28"/>
<rect x="159.47" y="929.77" width="1.6" height="1.6" fill="#3c8c28"/>
<circle cx="1078.7" cy="81.37" r="3.2" fill="#c4261c"/>
<rect x="1077.9" y="106.11" width="1.6" height="1.6" fill="#3c8c28"/>
<rect x="1077.9" y="131.65" width="1.6" height="1.6" fill="#3c8c28"/>
<circle cx="1078.7" cy="164.38" r="3.2" fill="#c4261c"/>
<rect x="1077.9" y="195.5" width="1.6" height="1.6" fill="#3c8c28"/>
<rect x="1077.9" y="233.81" width="1.6" height="1.6" fill="#3c8c28"/>
<rect x="1058.77" y="284.89" width="1.6" height="1.6" fill="#3c8c28"/>
<rect x="1077.9" y="310.43" width="1.6" height="1.6" fill="#3c8c28"/>
<circle cx="1078.7" cy="355.92" r="3.2" fill="#c4261c"/>
<rect x="1065.15" y="355.12" width="1.6" height="1.6" fill="#3c8c28"/>
<rect x="1077.9" y="450.9" width="1.6" height="1.6" fill="#3c8c28"/>
<circle cx="1078.7" cy="521.93" r="3.2" fill="#c4261c"/>
<rect x="1065.15" y="521.13" width="1.6" height="1.6" fill="#3c8c28"/>
<rect x="1077.9" y="591.37" width="1.6" height="1.6" fill="#3c8c28"/>
<rect x="1077.9" y="616.91" width="1.6" height="1.6" fill="#3c8c28"/>
<rect x="1269.24" y="67.8" width="1.6" height="1.6" fill="#3c8c28"/>
<circle cx="1270.04" cy="100.52" r="3.2" fill="#c4261c"/>
<rect x="1288.38" y="99.72" width="1.6" height="1.6" fill="#3c8c28"/>
<rect x="1269.24" y="131.65" width="1.6" height="1.6" fill="#3c8c28"/>
<rect x="1269.24" y="208.27" width="1.6" height="1.6" fill="#3c8c28"/>
<rect x="1269.24" y="272.12" width="1.6" height="1.6" fill="#3c8c28"/>
<rect x="1269.24" y="489.21" width="1.6" height="1.6" fill="#3c8c28"/>
<rect x="1269.24" y="553.06" width="1.6" height="1.6" fill="#3c8c28"/>
<rect x="1269.24" y="169.96" width="1.6" height="1.6" fill="#3c8c28"/>
<rect x="1269.24" y="348.74" width="1.6" height="1.6" fill="#3c8c28"/>
<rect x="1269.24" y="412.59" width="1.6" height="1.6" fill="#3c8c28"/>
<rect x="1269.24" y="527.52" width="1.6" height="1.6" fill="#3c8c28"/>
<rect x="1269.24" y="604.14" width="1.6" height="1.6" fill="#3c8c28"/>
</g>
<g id="text">
<text transform="translate(124.52 15.8) scale(1 1.12)" class="r" font-size="13.5" text-anchor="middle">1</text>
<text transform="translate(125.72 1056) scale(1 1.12)" class="r" font-size="13.5" text-anchor="middle">1</text>
<text transform="translate(373.35 15.8) scale(1 1.12)" class="r" font-size="13.5" text-anchor="middle">2</text>
<text transform="translate(374.55 1056) scale(1 1.12)" class="r" font-size="13.5" text-anchor="middle">2</text>
<text transform="translate(622.18 15.8) scale(1 1.12)" class="r" font-size="13.5" text-anchor="middle">3</text>
<text transform="translate(623.38 1056) scale(1 1.12)" class="r" font-size="13.5" text-anchor="middle">3</text>
<text transform="translate(871.02 15.8) scale(1 1.12)" class="r" font-size="13.5" text-anchor="middle">4</text>
<text transform="translate(872.22 1056) scale(1 1.12)" class="r" font-size="13.5" text-anchor="middle">4</text>
<text transform="translate(1119.85 15.8) scale(1 1.12)" class="r" font-size="13.5" text-anchor="middle">5</text>
<text transform="translate(1121.05 1056) scale(1 1.12)" class="r" font-size="13.5" text-anchor="middle">5</text>
<text transform="translate(1368.68 15.8) scale(1 1.12)" class="r" font-size="13.5" text-anchor="middle">6</text>
<text transform="translate(1369.88 1056) scale(1 1.12)" class="r" font-size="13.5" text-anchor="middle">6</text>
<text transform="translate(7.4 141.9) scale(1 1.12)" class="r" font-size="13.5" text-anchor="middle">A</text>
<text transform="translate(1487.2 141.9) scale(1 1.12)" class="r" font-size="13.5" text-anchor="middle">A</text>
<text transform="translate(7.4 405.4) scale(1 1.12)" class="r" font-size="13.5" text-anchor="middle">B</text>
<text transform="translate(1487.2 405.4) scale(1 1.12)" class="r" font-size="13.5" text-anchor="middle">B</text>
<text transform="translate(7.4 669) scale(1 1.12)" class="r" font-size="13.5" text-anchor="middle">C</text>
<text transform="translate(1487.2 669) scale(1 1.12)" class="r" font-size="13.5" text-anchor="middle">C</text>
<text transform="translate(7.4 932.2) scale(1 1.12)" class="r" font-size="13.5" text-anchor="middle">D</text>
<text transform="translate(1487.2 932.2) scale(1 1.12)" class="r" font-size="13.5" text-anchor="middle">D</text>
<text transform="translate(593.6 846.88) scale(1 1.04)" class="k" font-size="17">Schematic</text>
<text transform="translate(593.6 885.48) scale(1 1.04)" class="k" font-size="17">Board</text>
<text transform="translate(593.6 911.28) scale(1 1.04)" class="k" font-size="17">Drawn</text>
<text transform="translate(593.6 935.88) scale(1 1.04)" class="k" font-size="17">Reviewed</text>
<text transform="translate(953.2 848.05) scale(1 1.04)" class="k" font-size="22.5" text-anchor="middle">Schematic1</text>
<text transform="translate(953.2 885.48) scale(1 1.04)" class="k" font-size="17" text-anchor="middle">Board1</text>
<text transform="translate(1192.5 834.38) scale(1 1.04)" class="k" font-size="17">Create at</text>
<text transform="translate(1192.5 860.08) scale(1 1.04)" class="k" font-size="17">Update at</text>
<text transform="translate(1192.5 885.48) scale(1 1.04)" class="k" font-size="17">Page</text>
<text transform="translate(1294.6 834.38) scale(1 1.04)" class="k" font-size="17">2025-07-10</text>
<text transform="translate(1294.6 860.08) scale(1 1.04)" class="k" font-size="17">2025-07-12</text>
<text transform="translate(1294.6 885.48) scale(1 1.04)" class="k" font-size="17">P1</text>
<text transform="translate(1172.3 937.05) scale(1 1.04)" class="k" font-size="22.5" text-anchor="middle">stm32blepcb</text>
<text transform="translate(923.6 987.48) scale(1 1.04)" class="k" font-size="17" text-anchor="middle">Version</text>
<text transform="translate(1029.9 987.48) scale(1 1.04)" class="k" font-size="17" text-anchor="middle">Size</text>
<text transform="translate(923.6 1025.28) scale(1 1.04)" class="k" font-size="17" text-anchor="middle">V1.0</text>
<text transform="translate(1029.9 1025.28) scale(1 1.04)" class="k" font-size="17" text-anchor="middle">A4</text>
<text transform="translate(1217.6 987.48) scale(1 1.04)" class="k" font-size="17">Page</text>
<text transform="translate(1267.6 987.48) scale(1 1.04)" class="k" font-size="17">1</text>
<text transform="translate(1286.8 987.48) scale(1 1.04)" class="k" font-size="17">Total</text>
<text transform="translate(1331.6 987.48) scale(1 1.04)" class="k" font-size="17">1</text>
<text transform="translate(1279 1025.28) scale(1 1.04)" class="k" font-size="17" text-anchor="middle">EasyEDA.com</text>
<text x="684.6" y="1034" fill="#5b8cf7" font-size="32.4" font-weight="bold" font-style="italic" stroke="#5b8cf7" stroke-width=".5" textLength="131" lengthAdjust="spacingAndGlyphs">EasyEDA</text>
<text transform="translate(20.5 277.43) scale(1 1.12)" class="k">Lipo charge circut.</text>
<text transform="translate(333 277.43) scale(1 1.12)" class="k">lipo-usb switch circut</text>
<text transform="translate(27 628.23) scale(1 1.12)" class="k">Crystals</text>
<text transform="translate(52.3 136.33) scale(1 1.12)" class="b" text-anchor="end">VBUS</text>
<text transform="translate(141.3 194.43) scale(1 1.12)" class="n" text-anchor="middle">GND</text>
<text transform="translate(167 206.93) scale(1 1.12)" class="n" text-anchor="middle">GND</text>
<text transform="translate(253.86 113.29) rotate(-90) scale(1 1.12)" class="n v" text-anchor="middle">GND</text>
<text transform="translate(279.37 55.83) rotate(-90) scale(1 1.12)" class="n v" text-anchor="middle">GND</text>
<text transform="translate(279.37 170.76) rotate(-90) scale(1 1.12)" class="n v" text-anchor="middle">GND</text>
<text transform="translate(155 47.03) scale(1 1.12)" class="n">U6</text>
<text transform="translate(205.5 47.43) scale(1 1.12)" class="n">R22</text>
<text transform="translate(205.5 73.33) scale(1 1.12)" class="b">5.1kΩ</text>
<text transform="translate(205.5 162.43) scale(1 1.12)" class="n">R23</text>
<text transform="translate(205.5 187.63) scale(1 1.12)" class="b">5.1kΩ</text>
<text transform="translate(237 194.43) scale(1 1.12)" class="b">TYPE-C 6PIN</text>
<text transform="translate(166.78 67.6) rotate(-90) scale(1 1.12)" class="k v">A12</text>
<text transform="translate(179.53 67.6) rotate(-90) scale(1 1.12)" class="k v">A9</text>
<text transform="translate(192.29 67.6) rotate(-90) scale(1 1.12)" class="k v">A5</text>
<text transform="translate(166.78 159.4) rotate(-90) scale(1 1.12)" class="k v" text-anchor="end">B12</text>
<text transform="translate(179.53 159.4) rotate(-90) scale(1 1.12)" class="k v" text-anchor="end">B9</text>
<text transform="translate(192.29 159.4) rotate(-90) scale(1 1.12)" class="k v" text-anchor="end">B5</text>
<text transform="translate(172.38 74) rotate(-90) scale(1 1.12)" class="k v" text-anchor="end">GND</text>
<text transform="translate(185.13 74) rotate(-90) scale(1 1.12)" class="k v" text-anchor="end">VBUS</text>
<text transform="translate(197.89 74) rotate(-90) scale(1 1.12)" class="k v" text-anchor="end">CC1</text>
<text transform="translate(172.38 152.3) rotate(-90) scale(1 1.12)" class="k v">GND</text>
<text transform="translate(185.13 152.3) rotate(-90) scale(1 1.12)" class="k v">VBUS</text>
<text transform="translate(197.89 152.3) rotate(-90) scale(1 1.12)" class="k v">CC2</text>
<text transform="translate(197.2 115.03) scale(1 1.12)" class="k" text-anchor="middle">7</text>
<text transform="translate(206.2 109.83) scale(1 1.12)" class="k" text-anchor="middle">7</text>
<text transform="translate(368.93 145.22) rotate(-90) scale(1 1.12)" class="n v" text-anchor="middle">GND</text>
<text transform="translate(396.4 130.23) scale(1 1.12)" class="b" text-anchor="end">PPATH</text>
<text transform="translate(702.6 105.03) scale(1 1.12)" class="b">3.3</text>
<text transform="translate(657.75 213.35) scale(1 1.12)" class="n" text-anchor="middle">GND</text>
<text transform="translate(460.8 111.23) scale(1 1.12)" class="n">U4</text>
<text transform="translate(460.8 175.33) scale(1 1.12)" class="b">LM3671MFX-3.3/NOPB</text>
<text transform="translate(550.2 116.93) scale(1 1.12)" class="n">U5</text>
<text transform="translate(549.9 143.03) scale(1 1.12)" class="b">2.2uH</text>
<text transform="translate(696.8 149.43) scale(1 1.12)" class="n">C4</text>
<text transform="translate(696.8 162.03) scale(1 1.12)" class="b">10uF</text>
<text transform="translate(456.3 124.27) scale(1 1.12)" class="k" text-anchor="middle">1</text>
<text transform="translate(456.3 137.03) scale(1 1.12)" class="k" text-anchor="middle">2</text>
<text transform="translate(456.3 149.8) scale(1 1.12)" class="k" text-anchor="middle">3</text>
<text transform="translate(528.2 124.27) scale(1 1.12)" class="k" text-anchor="middle">5</text>
<text transform="translate(528.2 149.8) scale(1 1.12)" class="k" text-anchor="middle">4</text>
<text transform="translate(465 131.4) scale(1 1.12)" class="k">VIN</text>
<text transform="translate(465 144.17) scale(1 1.12)" class="k">GND</text>
<text transform="translate(465 156.94) scale(1 1.12)" class="k">EN</text>
<text transform="translate(520 131.4) scale(1 1.12)" class="k" text-anchor="end">SW</text>
<text transform="translate(520 156.94) scale(1 1.12)" class="k" text-anchor="end">FB</text>
<text transform="translate(81.92 490.01) rotate(-90) scale(1 1.12)" class="n v" text-anchor="middle">GND</text>
<text transform="translate(224.05 341.36) scale(1 1.12)" class="n" text-anchor="middle">GND</text>
<text transform="translate(263.3 494.03) scale(1 1.12)" class="b">VBUS</text>
<text transform="translate(243.18 590.06) scale(1 1.12)" class="n" text-anchor="middle">GND</text>
<text transform="translate(30.9 534.7) rotate(-90) scale(1 1.12)" class="n v" text-anchor="middle">GND</text>
<text transform="translate(112.73 600.4) rotate(-90) scale(1 1.12)" class="b v" text-anchor="middle">B+</text>
<text transform="translate(167.3 283.03) scale(1 1.12)" class="n">R6</text>
<text transform="translate(167.3 309.23) scale(1 1.12)" class="b">470Ω</text>
<text transform="translate(122.8 315.03) scale(1 1.12)" class="n">LED1</text>
<text transform="translate(122.6 328.03) scale(1 1.12)" class="b">XL-1608SURC-06</text>
<text transform="translate(213.2 392.27) scale(1 1.12)" class="n" font-size="7.7" text-anchor="end">R19</text>
<text transform="translate(213.2 404.03) scale(1 1.12)" class="b" text-anchor="end">1kΩ</text>
<text transform="translate(213.2 449.97) scale(1 1.12)" class="n" font-size="7.7" text-anchor="end">R18</text>
<text transform="translate(213.2 462.03) scale(1 1.12)" class="b" text-anchor="end">1kΩ</text>
<text transform="translate(97 423.33) scale(1 1.12)" class="b">MCP73831T-2ACI/OT-HXY</text>
<text transform="translate(122.5 462.03) scale(1 1.12)" class="n">U3</text>
<text transform="translate(71.8 518.93) scale(1 1.12)" class="n">C1</text>
<text transform="translate(72.5 558.23) scale(1 1.12)" class="b">10uF</text>
<text transform="translate(263.3 525.23) scale(1 1.12)" class="n">C2</text>
<text transform="translate(263.3 539.03) scale(1 1.12)" class="b">10uF</text>
<text transform="translate(118 475.44) scale(1 1.12)" class="k" text-anchor="middle">1</text>
<text transform="translate(118 488.21) scale(1 1.12)" class="k" text-anchor="middle">2</text>
<text transform="translate(118 500.98) scale(1 1.12)" class="k" text-anchor="middle">3</text>
<text transform="translate(215.6 475.44) scale(1 1.12)" class="k" text-anchor="middle">5</text>
<text transform="translate(215.6 500.98) scale(1 1.12)" class="k" text-anchor="middle">4</text>
<text transform="translate(127.5 482.57) scale(1 1.12)" class="k">CHRG</text>
<text transform="translate(127.5 495.34) scale(1 1.12)" class="k">GND</text>
<text transform="translate(127.5 508.11) scale(1 1.12)" class="k">BAT</text>
<text transform="translate(206.3 482.57) scale(1 1.12)" class="k" text-anchor="end">PROG</text>
<text transform="translate(206.3 508.11) scale(1 1.12)" class="k" text-anchor="end">VCC</text>
<text transform="translate(460.04 288.98) scale(1 1.12)" class="n" text-anchor="middle">GND</text>
<text transform="translate(518.3 372.03) scale(1 1.12)" class="b">PPATH</text>
<text transform="translate(339.4 372.03) scale(1 1.12)" class="b" text-anchor="end">B+</text>
<text transform="translate(425.73 506.4) rotate(-90) scale(1 1.12)" class="b v">VBUS</text>
<text transform="translate(460.04 506.26) scale(1 1.12)" class="n" text-anchor="middle">GND</text>
<text transform="translate(480 340.73) scale(1 1.12)" class="n">C3</text>
<text transform="translate(480 353.23) scale(1 1.12)" class="b">10uF</text>
<text transform="translate(410 346.93) scale(1 1.12)" class="n">Q1</text>
<text transform="translate(384.3 334.03) scale(1 1.12)" class="b">DMP1045U-7</text>
<text transform="translate(473.8 397.73) scale(1 1.12)" class="n">D1</text>
<text transform="translate(473.8 411.23) scale(1 1.12)" class="b">B130LAW-7-F</text>
<text transform="translate(473.8 443.23) scale(1 1.12)" class="n">R7</text>
<text transform="translate(473.8 455.23) scale(1 1.12)" class="b">100kΩ</text>
<text transform="translate(624.03 291.2) rotate(-90) scale(1 1.12)" class="b v">B+</text>
<text transform="translate(632.7 353.23) scale(1 1.12)" class="n" text-anchor="middle">GND</text>
<text transform="translate(618.63 389.8) rotate(-90) scale(1 1.12)" class="k v" text-anchor="middle">2</text>
<text transform="translate(631.93 389.8) rotate(-90) scale(1 1.12)" class="k v" text-anchor="middle">1</text>
<text transform="translate(625.33 401.4) rotate(-90) scale(1 1.12)" class="k v" text-anchor="middle">2</text>
<text transform="translate(637.43 402.2) rotate(-90) scale(1 1.12)" class="k v" text-anchor="middle">1</text>
<text transform="translate(651.9 403.9) scale(1 1.12)" class="n">U2</text>
<text transform="translate(651.9 416.4) scale(1 1.12)" class="b">S2B-PH-K-S(LF)(SN)</text>
<text transform="translate(192.16 627.68) scale(1 1.12)" class="n" text-anchor="middle">GND</text>
<text transform="translate(88.3 707.1) rotate(-90) scale(1 1.12)" class="n v" text-anchor="middle">GND</text>
<text transform="translate(58.2 736.93) scale(1 1.12)" class="b" text-anchor="end">HSEIN</text>
<text transform="translate(115.62 820.12) scale(1 1.12)" class="n" text-anchor="middle">GND</text>
<text transform="translate(250 711.23) scale(1 1.12)" class="b">HSEOUT</text>
<text transform="translate(228.05 732.64) rotate(-90) scale(1 1.12)" class="n v" text-anchor="middle">GND</text>
<text transform="translate(51.9 883.93) scale(1 1.12)" class="b" text-anchor="end">LSEIN</text>
<text transform="translate(218.8 883.93) scale(1 1.12)" class="b">LSEOUT</text>
<text transform="translate(109.25 965.78) scale(1 1.12)" class="n" text-anchor="middle">GND</text>
<text transform="translate(160.27 965.78) scale(1 1.12)" class="n" text-anchor="middle">GND</text>
<text transform="translate(212 679.43) scale(1 1.12)" class="n">C5</text>
<text transform="translate(212 691.93) scale(1 1.12)" class="b">18pF</text>
<text transform="translate(129.3 692) scale(1 1.12)" class="n">X3</text>
<text transform="translate(129.3 756.5) scale(1 1.12)" class="b">32MHz</text>
<text transform="translate(78.8 768.73) scale(1 1.12)" class="b">18pF</text>
<text transform="translate(85 781.23) scale(1 1.12)" class="n">C6</text>
<text transform="translate(116.3 851.93) scale(1 1.12)" class="b">32.768kHz</text>
<text transform="translate(122.5 864.43) scale(1 1.12)" class="n">X2</text>
<text transform="translate(78.3 902.73) scale(1 1.12)" class="n">C8</text>
<text transform="translate(72.5 922.23) scale(1 1.12)" class="b">19pF</text>
<text transform="translate(180 902.73) scale(1 1.12)" class="n">C7</text>
<text transform="translate(180 915.23) scale(1 1.12)" class="b">19pF</text>
<text transform="translate(125.4 705.1) scale(1 1.12)" class="k" text-anchor="middle">4</text>
<text transform="translate(125.4 730.64) scale(1 1.12)" class="k" text-anchor="middle">1</text>
<text transform="translate(183.2 705.1) scale(1 1.12)" class="k" text-anchor="middle">3</text>
<text transform="translate(183.2 730.64) scale(1 1.12)" class="k" text-anchor="middle">2</text>
<text transform="translate(1104.3 54.03) scale(1 1.12)" class="n">U1</text>
<text transform="translate(1104.3 641.43) scale(1 1.12)" class="b">STM32WBA65MIF6TR</text>
<text transform="translate(995.9 85.2) scale(1 1.12)" class="b" text-anchor="end">3.3</text>
<text transform="translate(1051.38 106.91) rotate(-90) scale(1 1.12)" class="n v" text-anchor="middle">GND</text>
<text transform="translate(976.9 123.61) scale(1 1.12)" class="b" text-anchor="end">HSEIN</text>
<text transform="translate(1021.3 136.38) scale(1 1.12)" class="b" text-anchor="end">3.3</text>
<text transform="translate(1002.1 168.21) scale(1 1.12)" class="b" text-anchor="end">3.3</text>
<text transform="translate(1051.38 196.3) rotate(-90) scale(1 1.12)" class="n v" text-anchor="middle">GND</text>
<text transform="translate(1020.8 238.64) scale(1 1.12)" class="b" text-anchor="end">HSEOUT</text>
<text transform="translate(1032.24 285.69) rotate(-90) scale(1 1.12)" class="n v" text-anchor="middle">GND</text>
<text transform="translate(951.4 302.49) scale(1 1.12)" class="b" text-anchor="end">3.3</text>
<text transform="translate(1020.8 315.16) scale(1 1.12)" class="b" text-anchor="end">RST</text>
<text transform="translate(1038.62 355.92) rotate(-90) scale(1 1.12)" class="n v" text-anchor="middle">GND</text>
<text transform="translate(1051.38 451.7) rotate(-90) scale(1 1.12)" class="n v" text-anchor="middle">GND</text>
<text transform="translate(1038.62 521.93) rotate(-90) scale(1 1.12)" class="n v" text-anchor="middle">GND</text>
<text transform="translate(1051.38 592.17) rotate(-90) scale(1 1.12)" class="n v" text-anchor="middle">GND</text>
<text transform="translate(1078.7 654.31) scale(1 1.12)" class="n" text-anchor="middle">GND</text>
<text transform="translate(1306.23 68.6) rotate(-90) scale(1 1.12)" class="n v" text-anchor="middle">GND</text>
<text transform="translate(1325.36 100.52) rotate(-90) scale(1 1.12)" class="n v" text-anchor="middle">GND</text>
<text transform="translate(1327.8 136.38) scale(1 1.12)" class="b">3.3</text>
<text transform="translate(1327.8 213) scale(1 1.12)" class="b">3.3</text>
<text transform="translate(1327.8 276.85) scale(1 1.12)" class="b">3.3</text>
<text transform="translate(1327.8 493.94) scale(1 1.12)" class="b">3.3</text>
<text transform="translate(1327.8 557.79) scale(1 1.12)" class="b">3.3</text>
<text transform="translate(1306.23 170.76) rotate(-90) scale(1 1.12)" class="n v" text-anchor="middle">GND</text>
<text transform="translate(1306.23 349.54) rotate(-90) scale(1 1.12)" class="n v" text-anchor="middle">GND</text>
<text transform="translate(1306.23 413.39) rotate(-90) scale(1 1.12)" class="n v" text-anchor="middle">GND</text>
<text transform="translate(1327.6 532.95) scale(1 1.12)" class="b">LSEIN</text>
<text transform="translate(1334.9 609.67) scale(1 1.12)" class="b">LSEOUT</text>
<text transform="translate(1091.46 66.3) scale(1 1.12)" class="k" text-anchor="middle">A4</text>
<text transform="translate(1116.97 72.63) scale(1 1.12)" class="k">VDDRF</text>
<text transform="translate(1091.46 79.07) scale(1 1.12)" class="k" text-anchor="middle">A6</text>
<text transform="translate(1116.97 85.4) scale(1 1.12)" class="k">VDDRFPA</text>
<text transform="translate(1091.46 91.84) scale(1 1.12)" class="k" text-anchor="middle">A8</text>
<text transform="translate(1116.97 98.17) scale(1 1.12)" class="k">VDD11</text>
<text transform="translate(1091.46 104.61) scale(1 1.12)" class="k" text-anchor="middle">A10</text>
<text transform="translate(1116.97 110.94) scale(1 1.12)" class="k">VSSSMPS</text>
<text transform="translate(1091.46 117.38) scale(1 1.12)" class="k" text-anchor="middle">B5</text>
<text transform="translate(1116.97 123.71) scale(1 1.12)" class="k">OSC<tspan dx="-1" dy="-0.6">_</tspan><tspan dx="-1" dy="0.6">IN</tspan></text>
<text transform="translate(1091.46 130.15) scale(1 1.12)" class="k" text-anchor="middle">B7</text>
<text transform="translate(1116.97 136.48) scale(1 1.12)" class="k">VDD<tspan dx="-1" dy="-0.6">_</tspan><tspan dx="-1" dy="0.6">1</tspan></text>
<text transform="translate(1091.46 142.92) scale(1 1.12)" class="k" text-anchor="middle">B9</text>
<text transform="translate(1116.97 149.25) scale(1 1.12)" class="k">PA9</text>
<text transform="translate(1091.46 155.69) scale(1 1.12)" class="k" text-anchor="middle">B11</text>
<text transform="translate(1116.97 162.02) scale(1 1.12)" class="k">VDDSMPS</text>
<text transform="translate(1091.46 168.46) scale(1 1.12)" class="k" text-anchor="middle">C4</text>
<text transform="translate(1116.97 174.79) scale(1 1.12)" class="k">VDDANA</text>
<text transform="translate(1091.46 181.23) scale(1 1.12)" class="k" text-anchor="middle">C6</text>
<text transform="translate(1116.97 187.56) scale(1 1.12)" class="k">PH3-<tspan dx="-1" dy="-0.6">_</tspan><tspan dx="-1" dy="0.6">BOOT0</tspan></text>
<text transform="translate(1091.46 194) scale(1 1.12)" class="k" text-anchor="middle">C8</text>
<text transform="translate(1116.97 200.33) scale(1 1.12)" class="k">VSS<tspan dx="-1" dy="-0.6">_</tspan><tspan dx="-1" dy="0.6">1</tspan></text>
<text transform="translate(1091.46 206.77) scale(1 1.12)" class="k" text-anchor="middle">C10</text>
<text transform="translate(1116.97 213.1) scale(1 1.12)" class="k">PB13</text>
<text transform="translate(1091.46 219.54) scale(1 1.12)" class="k" text-anchor="middle">D1</text>
<text transform="translate(1116.97 225.87) scale(1 1.12)" class="k">RF</text>
<text transform="translate(1091.46 232.31) scale(1 1.12)" class="k" text-anchor="middle">D5</text>
<text transform="translate(1116.97 238.64) scale(1 1.12)" class="k">OSC<tspan dx="-1" dy="-0.6">_</tspan><tspan dx="-1" dy="0.6">OUT</tspan></text>
<text transform="translate(1091.46 245.08) scale(1 1.12)" class="k" text-anchor="middle">D7</text>
<text transform="translate(1116.97 251.41) scale(1 1.12)" class="k">PA10</text>
<text transform="translate(1091.46 257.85) scale(1 1.12)" class="k" text-anchor="middle">D9</text>
<text transform="translate(1116.97 264.18) scale(1 1.12)" class="k">PB14</text>
<text transform="translate(1091.46 270.62) scale(1 1.12)" class="k" text-anchor="middle">D11</text>
<text transform="translate(1116.97 276.95) scale(1 1.12)" class="k">VLXSMPS</text>
<text transform="translate(1091.46 283.39) scale(1 1.12)" class="k" text-anchor="middle">E2</text>
<text transform="translate(1116.97 289.72) scale(1 1.12)" class="k">VSSRF<tspan dx="-1" dy="-0.6">_</tspan><tspan dx="-1" dy="0.6">1</tspan></text>
<text transform="translate(1091.46 296.16) scale(1 1.12)" class="k" text-anchor="middle">E4</text>
<text transform="translate(1116.97 302.49) scale(1 1.12)" class="k">VDDHPA</text>
<text transform="translate(1091.46 308.93) scale(1 1.12)" class="k" text-anchor="middle">E6</text>
<text transform="translate(1116.97 315.26) scale(1 1.12)" class="k">NRST</text>
<text transform="translate(1091.46 321.7) scale(1 1.12)" class="k" text-anchor="middle">E8</text>
<text transform="translate(1116.97 328.03) scale(1 1.12)" class="k">PC3</text>
<text transform="translate(1091.46 334.47) scale(1 1.12)" class="k" text-anchor="middle">E10</text>
<text transform="translate(1116.97 340.8) scale(1 1.12)" class="k">PB12</text>
<text transform="translate(1091.46 347.24) scale(1 1.12)" class="k" text-anchor="middle">F1</text>
<text transform="translate(1116.97 353.57) scale(1 1.12)" class="k">VSSRF<tspan dx="-1" dy="-0.6">_</tspan><tspan dx="-1" dy="0.6">2</tspan></text>
<text transform="translate(1091.46 360.01) scale(1 1.12)" class="k" text-anchor="middle">F3</text>
<text transform="translate(1116.97 366.34) scale(1 1.12)" class="k">VSSRF<tspan dx="-1" dy="-0.6">_</tspan><tspan dx="-1" dy="0.6">3</tspan></text>
<text transform="translate(1091.46 372.78) scale(1 1.12)" class="k" text-anchor="middle">F5</text>
<text transform="translate(1116.97 379.11) scale(1 1.12)" class="k">PC6</text>
<text transform="translate(1091.46 385.55) scale(1 1.12)" class="k" text-anchor="middle">F7</text>
<text transform="translate(1116.97 391.88) scale(1 1.12)" class="k">PC5</text>
<text transform="translate(1091.46 398.32) scale(1 1.12)" class="k" text-anchor="middle">F9</text>
<text transform="translate(1116.97 404.65) scale(1 1.12)" class="k">PB11</text>
<text transform="translate(1091.46 411.09) scale(1 1.12)" class="k" text-anchor="middle">F11</text>
<text transform="translate(1116.97 417.42) scale(1 1.12)" class="k">PA8</text>
<text transform="translate(1091.46 423.86) scale(1 1.12)" class="k" text-anchor="middle">G2</text>
<text transform="translate(1116.97 430.19) scale(1 1.12)" class="k">PB15</text>
<text transform="translate(1091.46 436.63) scale(1 1.12)" class="k" text-anchor="middle">G4</text>
<text transform="translate(1116.97 442.96) scale(1 1.12)" class="k">PC8</text>
<text transform="translate(1091.46 449.4) scale(1 1.12)" class="k" text-anchor="middle">G6</text>
<text transform="translate(1116.97 455.73) scale(1 1.12)" class="k">VSS<tspan dx="-1" dy="-0.6">_</tspan><tspan dx="-1" dy="0.6">2</tspan></text>
<text transform="translate(1091.46 462.17) scale(1 1.12)" class="k" text-anchor="middle">G8</text>
<text transform="translate(1116.97 468.5) scale(1 1.12)" class="k">PC4</text>
<text transform="translate(1091.46 474.94) scale(1 1.12)" class="k" text-anchor="middle">G10</text>
<text transform="translate(1116.97 481.27) scale(1 1.12)" class="k">PA7</text>
<text transform="translate(1091.46 487.71) scale(1 1.12)" class="k" text-anchor="middle">H1</text>
<text transform="translate(1116.97 494.04) scale(1 1.12)" class="k">PC7</text>
<text transform="translate(1091.46 500.48) scale(1 1.12)" class="k" text-anchor="middle">H3</text>
<text transform="translate(1116.97 506.81) scale(1 1.12)" class="k">PB0</text>
<text transform="translate(1091.46 513.25) scale(1 1.12)" class="k" text-anchor="middle">H5</text>
<text transform="translate(1116.97 519.58) scale(1 1.12)" class="k">VSS<tspan dx="-1" dy="-0.6">_</tspan><tspan dx="-1" dy="0.6">3</tspan></text>
<text transform="translate(1091.46 526.02) scale(1 1.12)" class="k" text-anchor="middle">H7</text>
<text transform="translate(1116.97 532.35) scale(1 1.12)" class="k">VSS<tspan dx="-1" dy="-0.6">_</tspan><tspan dx="-1" dy="0.6">4</tspan></text>
<text transform="translate(1091.46 538.79) scale(1 1.12)" class="k" text-anchor="middle">H9</text>
<text transform="translate(1116.97 545.12) scale(1 1.12)" class="k">PA6</text>
<text transform="translate(1091.46 551.56) scale(1 1.12)" class="k" text-anchor="middle">H11</text>
<text transform="translate(1116.97 557.89) scale(1 1.12)" class="k">VREF+</text>
<text transform="translate(1091.46 564.33) scale(1 1.12)" class="k" text-anchor="middle">J2</text>
<text transform="translate(1116.97 570.66) scale(1 1.12)" class="k">PB1</text>
<text transform="translate(1091.46 577.1) scale(1 1.12)" class="k" text-anchor="middle">J4</text>
<text transform="translate(1116.97 583.43) scale(1 1.12)" class="k">PB2</text>
<text transform="translate(1091.46 589.87) scale(1 1.12)" class="k" text-anchor="middle">J6</text>
<text transform="translate(1116.97 596.2) scale(1 1.12)" class="k">VSS<tspan dx="-1" dy="-0.6">_</tspan><tspan dx="-1" dy="0.6">5</tspan></text>
<text transform="translate(1091.46 602.64) scale(1 1.12)" class="k" text-anchor="middle">J8</text>
<text transform="translate(1116.97 608.97) scale(1 1.12)" class="k">PC1</text>
<text transform="translate(1091.46 615.41) scale(1 1.12)" class="k" text-anchor="middle">J10</text>
<text transform="translate(1116.97 621.74) scale(1 1.12)" class="k">VSSA</text>
<text transform="translate(1257.29 79) scale(1 1.12)" class="k" text-anchor="middle">K1</text>
<text transform="translate(1231.77 72.63) scale(1 1.12)" class="k" text-anchor="end">VSS<tspan dx="-1" dy="-0.6">_</tspan><tspan dx="-1" dy="0.6">6</tspan></text>
<text transform="translate(1257.29 91.77) scale(1 1.12)" class="k" text-anchor="middle">K3</text>
<text transform="translate(1231.77 85.4) scale(1 1.12)" class="k" text-anchor="end">PA12</text>
<text transform="translate(1257.29 104.54) scale(1 1.12)" class="k" text-anchor="middle">K5</text>
<text transform="translate(1231.77 98.17) scale(1 1.12)" class="k" text-anchor="end">VSS<tspan dx="-1" dy="-0.6">_</tspan><tspan dx="-1" dy="0.6">7</tspan></text>
<text transform="translate(1257.29 117.31) scale(1 1.12)" class="k" text-anchor="middle">K7</text>
<text transform="translate(1231.77 110.94) scale(1 1.12)" class="k" text-anchor="end">VSS<tspan dx="-1" dy="-0.6">_</tspan><tspan dx="-1" dy="0.6">8</tspan></text>
<text transform="translate(1257.29 130.08) scale(1 1.12)" class="k" text-anchor="middle">K9</text>
<text transform="translate(1231.77 123.71) scale(1 1.12)" class="k" text-anchor="end">PC0</text>
<text transform="translate(1257.29 142.85) scale(1 1.12)" class="k" text-anchor="middle">K11</text>
<text transform="translate(1231.77 136.48) scale(1 1.12)" class="k" text-anchor="end">VDDA</text>
<text transform="translate(1257.29 155.62) scale(1 1.12)" class="k" text-anchor="middle">L2</text>
<text transform="translate(1231.77 149.25) scale(1 1.12)" class="k" text-anchor="end">PA11</text>
<text transform="translate(1257.29 168.39) scale(1 1.12)" class="k" text-anchor="middle">L4</text>
<text transform="translate(1231.77 162.02) scale(1 1.12)" class="k" text-anchor="end">PA13</text>
<text transform="translate(1257.29 181.16) scale(1 1.12)" class="k" text-anchor="middle">L6</text>
<text transform="translate(1231.77 174.79) scale(1 1.12)" class="k" text-anchor="end">VSS<tspan dx="-1" dy="-0.6">_</tspan><tspan dx="-1" dy="0.6">9</tspan></text>
<text transform="translate(1257.29 193.93) scale(1 1.12)" class="k" text-anchor="middle">L8</text>
<text transform="translate(1231.77 187.56) scale(1 1.12)" class="k" text-anchor="end">PA5</text>
<text transform="translate(1257.29 206.7) scale(1 1.12)" class="k" text-anchor="middle">L10</text>
<text transform="translate(1231.77 200.33) scale(1 1.12)" class="k" text-anchor="end">PA3</text>
<text transform="translate(1257.29 219.47) scale(1 1.12)" class="k" text-anchor="middle">M1</text>
<text transform="translate(1231.77 213.1) scale(1 1.12)" class="k" text-anchor="end">VDD<tspan dx="-1" dy="-0.6">_</tspan><tspan dx="-1" dy="0.6">2</tspan></text>
<text transform="translate(1257.29 232.24) scale(1 1.12)" class="k" text-anchor="middle">M3</text>
<text transform="translate(1231.77 225.87) scale(1 1.12)" class="k" text-anchor="end">PA14</text>
<text transform="translate(1257.29 245.01) scale(1 1.12)" class="k" text-anchor="middle">M5</text>
<text transform="translate(1231.77 238.64) scale(1 1.12)" class="k" text-anchor="end">PB3</text>
<text transform="translate(1257.29 257.78) scale(1 1.12)" class="k" text-anchor="middle">M7</text>
<text transform="translate(1231.77 251.41) scale(1 1.12)" class="k" text-anchor="end">PA4</text>
<text transform="translate(1257.29 270.55) scale(1 1.12)" class="k" text-anchor="middle">M9</text>
<text transform="translate(1231.77 264.18) scale(1 1.12)" class="k" text-anchor="end">PB10</text>
<text transform="translate(1257.29 283.32) scale(1 1.12)" class="k" text-anchor="middle">M11</text>
<text transform="translate(1231.77 276.95) scale(1 1.12)" class="k" text-anchor="end">VDD<tspan dx="-1" dy="-0.6">_</tspan><tspan dx="-1" dy="0.6">3</tspan></text>
<text transform="translate(1257.29 296.09) scale(1 1.12)" class="k" text-anchor="middle">N2</text>
<text transform="translate(1231.77 289.72) scale(1 1.12)" class="k" text-anchor="end">PA15</text>
<text transform="translate(1257.29 308.86) scale(1 1.12)" class="k" text-anchor="middle">N4</text>
<text transform="translate(1231.77 302.49) scale(1 1.12)" class="k" text-anchor="end">PD14</text>
<text transform="translate(1257.29 321.63) scale(1 1.12)" class="k" text-anchor="middle">N6</text>
<text transform="translate(1231.77 315.26) scale(1 1.12)" class="k" text-anchor="end">PD5</text>
<text transform="translate(1257.29 334.4) scale(1 1.12)" class="k" text-anchor="middle">N8</text>
<text transform="translate(1231.77 328.03) scale(1 1.12)" class="k" text-anchor="end">PA2</text>
<text transform="translate(1257.29 347.17) scale(1 1.12)" class="k" text-anchor="middle">N10</text>
<text transform="translate(1231.77 340.8) scale(1 1.12)" class="k" text-anchor="end">PA1</text>
<text transform="translate(1257.29 359.94) scale(1 1.12)" class="k" text-anchor="middle">P1</text>
<text transform="translate(1231.77 353.57) scale(1 1.12)" class="k" text-anchor="end">VSS<tspan dx="-1" dy="-0.6">_</tspan><tspan dx="-1" dy="0.6">10</tspan></text>
<text transform="translate(1257.29 372.71) scale(1 1.12)" class="k" text-anchor="middle">P3</text>
<text transform="translate(1231.77 366.34) scale(1 1.12)" class="k" text-anchor="end">PE0</text>
<text transform="translate(1257.29 385.48) scale(1 1.12)" class="k" text-anchor="middle">P5</text>
<text transform="translate(1231.77 379.11) scale(1 1.12)" class="k" text-anchor="end">PB5</text>
<text transform="translate(1257.29 398.25) scale(1 1.12)" class="k" text-anchor="middle">P7</text>
<text transform="translate(1231.77 391.88) scale(1 1.12)" class="k" text-anchor="end">PD9</text>
<text transform="translate(1257.29 411.02) scale(1 1.12)" class="k" text-anchor="middle">P9</text>
<text transform="translate(1231.77 404.65) scale(1 1.12)" class="k" text-anchor="end">PA0</text>
<text transform="translate(1257.29 423.79) scale(1 1.12)" class="k" text-anchor="middle">P11</text>
<text transform="translate(1231.77 417.42) scale(1 1.12)" class="k" text-anchor="end">VSS<tspan dx="-1" dy="-0.6">_</tspan><tspan dx="-1" dy="0.6">11</tspan></text>
<text transform="translate(1257.29 436.56) scale(1 1.12)" class="k" text-anchor="middle">R2</text>
<text transform="translate(1231.77 430.19) scale(1 1.12)" class="k" text-anchor="end">PE1</text>
<text transform="translate(1257.29 449.33) scale(1 1.12)" class="k" text-anchor="middle">R4</text>
<text transform="translate(1231.77 442.96) scale(1 1.12)" class="k" text-anchor="end">PB4</text>
<text transform="translate(1257.29 462.1) scale(1 1.12)" class="k" text-anchor="middle">R6</text>
<text transform="translate(1231.77 455.73) scale(1 1.12)" class="k" text-anchor="end">PB8</text>
<text transform="translate(1257.29 474.87) scale(1 1.12)" class="k" text-anchor="middle">R8</text>
<text transform="translate(1231.77 468.5) scale(1 1.12)" class="k" text-anchor="end">PD8</text>
<text transform="translate(1257.29 487.64) scale(1 1.12)" class="k" text-anchor="middle">R10</text>
<text transform="translate(1231.77 481.27) scale(1 1.12)" class="k" text-anchor="end">PB9</text>
<text transform="translate(1257.29 500.41) scale(1 1.12)" class="k" text-anchor="middle">T1</text>
<text transform="translate(1231.77 494.04) scale(1 1.12)" class="k" text-anchor="end">VDD<tspan dx="-1" dy="-0.6">_</tspan><tspan dx="-1" dy="0.6">4</tspan></text>
<text transform="translate(1257.29 513.18) scale(1 1.12)" class="k" text-anchor="middle">T3</text>
<text transform="translate(1231.77 506.81) scale(1 1.12)" class="k" text-anchor="end">PE2</text>
<text transform="translate(1257.29 525.95) scale(1 1.12)" class="k" text-anchor="middle">T5</text>
<text transform="translate(1231.77 519.58) scale(1 1.12)" class="k" text-anchor="end">PB7</text>
<text transform="translate(1257.29 538.72) scale(1 1.12)" class="k" text-anchor="middle">T7</text>
<text transform="translate(1231.77 532.35) scale(1 1.12)" class="k" text-anchor="end" style="stroke-width:.38px">PC14</text>
<text transform="translate(1257.29 551.49) scale(1 1.12)" class="k" text-anchor="middle">T9</text>
<text transform="translate(1231.77 545.12) scale(1 1.12)" class="k" text-anchor="end">PD6</text>
<text transform="translate(1257.29 564.26) scale(1 1.12)" class="k" text-anchor="middle">T11</text>
<text transform="translate(1231.77 557.89) scale(1 1.12)" class="k" text-anchor="end">VDDUSB</text>
<text transform="translate(1257.29 577.03) scale(1 1.12)" class="k" text-anchor="middle">U2</text>
<text transform="translate(1231.77 570.66) scale(1 1.12)" class="k" text-anchor="end">PE3</text>
<text transform="translate(1257.29 589.8) scale(1 1.12)" class="k" text-anchor="middle">U4</text>
<text transform="translate(1231.77 583.43) scale(1 1.12)" class="k" text-anchor="end">PB6</text>
<text transform="translate(1257.29 602.57) scale(1 1.12)" class="k" text-anchor="middle">U6</text>
<text transform="translate(1231.77 596.2) scale(1 1.12)" class="k" text-anchor="end">PC13</text>
<text transform="translate(1257.29 615.34) scale(1 1.12)" class="k" text-anchor="middle">U8</text>
<text transform="translate(1231.77 608.97) scale(1 1.12)" class="k" text-anchor="end">PC15</text>
<text transform="translate(1257.29 628.11) scale(1 1.12)" class="k" text-anchor="middle">U10</text>
<text transform="translate(1231.77 621.74) scale(1 1.12)" class="k" text-anchor="end">PD7</text>
</g>
</svg>
</body>
</html>
